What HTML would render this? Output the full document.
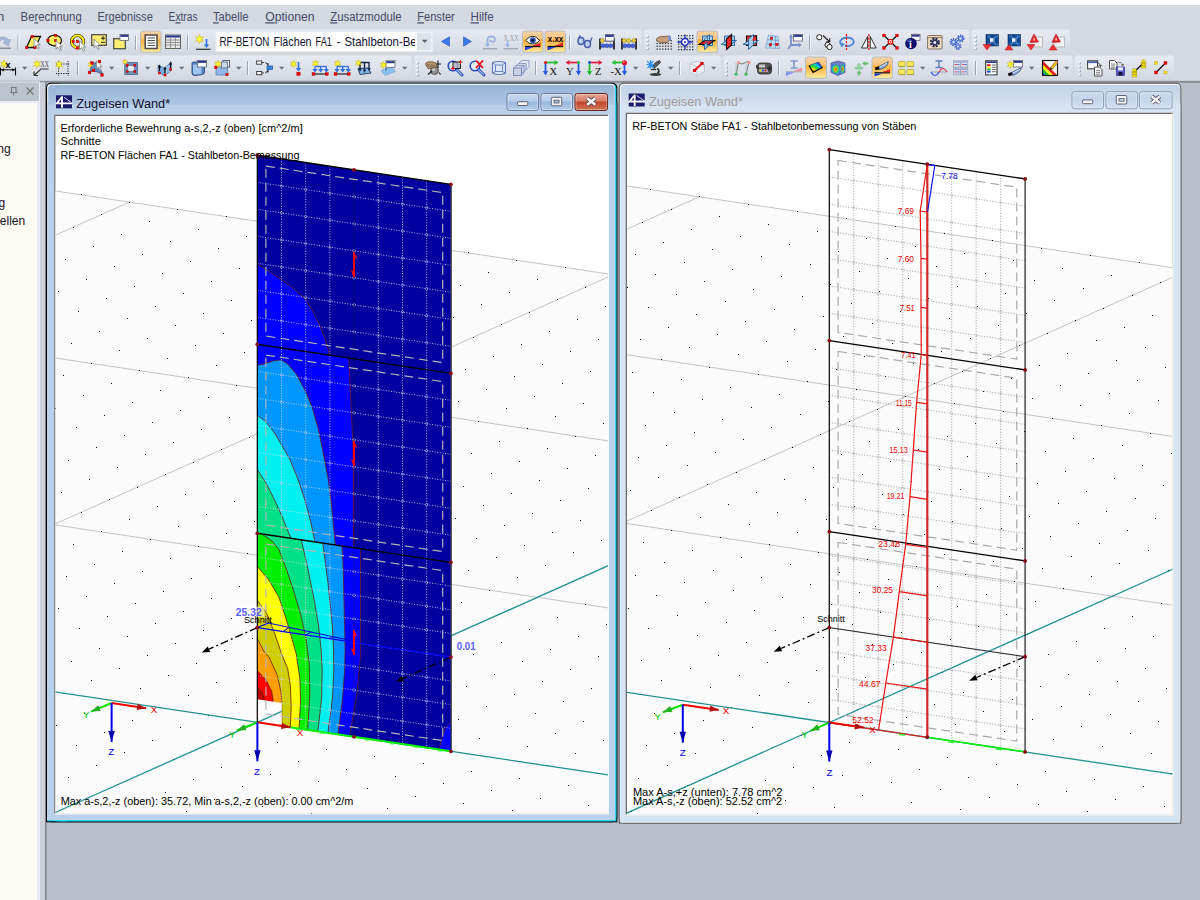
<!DOCTYPE html>
<html lang="de"><head><meta charset="utf-8"><title>RFEM - Zugeisen Wand</title>
<style>*{margin:0;padding:0}html,body{width:1200px;height:900px;overflow:hidden;background:#b9c0cb}svg{display:block;position:absolute;left:0;top:0}text{white-space:pre}</style></head><body>
<svg width="1200" height="900" viewBox="0 0 1200 900" font-family="Liberation Sans, sans-serif">
<defs>
<linearGradient id="tbg" x1="0" y1="0" x2="0" y2="1"><stop offset="0" stop-color="#e7eaf1"/><stop offset="0.5" stop-color="#dde1ea"/><stop offset="1" stop-color="#d1d6e1"/></linearGradient>
<linearGradient id="titA" x1="0" y1="0" x2="0" y2="1"><stop offset="0" stop-color="#98b4d6"/><stop offset="1" stop-color="#b9d1ea"/></linearGradient>
<linearGradient id="titI" x1="0" y1="0" x2="0" y2="1"><stop offset="0" stop-color="#c3d3e6"/><stop offset="1" stop-color="#dbe6f4"/></linearGradient>
<linearGradient id="btnA" x1="0" y1="0" x2="0" y2="1"><stop offset="0" stop-color="#c8daf0"/><stop offset="0.45" stop-color="#b4cbe8"/><stop offset="0.5" stop-color="#98b6da"/><stop offset="1" stop-color="#b6d0ec"/></linearGradient>
<linearGradient id="btnX" x1="0" y1="0" x2="0" y2="1"><stop offset="0" stop-color="#e8a898"/><stop offset="0.45" stop-color="#d87c68"/><stop offset="0.5" stop-color="#c2432c"/><stop offset="1" stop-color="#d07858"/></linearGradient>
<linearGradient id="btnI" x1="0" y1="0" x2="0" y2="1"><stop offset="0" stop-color="#cddbee"/><stop offset="0.5" stop-color="#c4d4ea"/><stop offset="1" stop-color="#d3e0f1"/></linearGradient>
<linearGradient id="hot" x1="0" y1="0" x2="0" y2="1"><stop offset="0" stop-color="#f8d2a8"/><stop offset="0.36" stop-color="#fbc57c"/><stop offset="0.42" stop-color="#fcae3e"/><stop offset="0.75" stop-color="#fdd070"/><stop offset="1" stop-color="#feec9e"/></linearGradient>
</defs>
<rect x="0" y="0" width="1200" height="900" fill="#b9c0cb"/>
<rect x="0" y="0" width="1200" height="5" fill="#fff" />
<rect x="0" y="5" width="1200" height="77" fill="#d5d9e2" />
<text x="-2.7" y="21.3" font-size="12" fill="#464a66" font-family="Liberation Sans, sans-serif" textLength="7" lengthAdjust="spacingAndGlyphs">n</text>
<text x="20.6" y="21.3" font-size="12" fill="#464a66" font-family="Liberation Sans, sans-serif" textLength="61.1" lengthAdjust="spacingAndGlyphs">Be<tspan text-decoration="underline">r</tspan>echnung</text>
<text x="97.5" y="21.3" font-size="12" fill="#464a66" font-family="Liberation Sans, sans-serif" textLength="55.3" lengthAdjust="spacingAndGlyphs">Er<tspan text-decoration="underline">g</tspan>ebnisse</text>
<text x="168.6" y="21.3" font-size="12" fill="#464a66" font-family="Liberation Sans, sans-serif" textLength="29" lengthAdjust="spacingAndGlyphs">E<tspan text-decoration="underline">x</tspan>tras</text>
<text x="213" y="21.3" font-size="12" fill="#464a66" font-family="Liberation Sans, sans-serif" textLength="35.5" lengthAdjust="spacingAndGlyphs"><tspan text-decoration="underline">T</tspan>abelle</text>
<text x="265.2" y="21.3" font-size="12" fill="#464a66" font-family="Liberation Sans, sans-serif" textLength="49.4" lengthAdjust="spacingAndGlyphs"><tspan text-decoration="underline">O</tspan>ptionen</text>
<text x="330.2" y="21.3" font-size="12" fill="#464a66" font-family="Liberation Sans, sans-serif" textLength="71.5" lengthAdjust="spacingAndGlyphs"><tspan text-decoration="underline">Z</tspan>usatzmodule</text>
<text x="417.3" y="21.3" font-size="12" fill="#464a66" font-family="Liberation Sans, sans-serif" textLength="37.5" lengthAdjust="spacingAndGlyphs"><tspan text-decoration="underline">F</tspan>enster</text>
<text x="470.6" y="21.3" font-size="12" fill="#464a66" font-family="Liberation Sans, sans-serif" textLength="23.2" lengthAdjust="spacingAndGlyphs"><tspan text-decoration="underline">H</tspan>ilfe</text>
<rect x="-5" y="29.5" width="646.5" height="25.5" fill="url(#tbg)" rx="3"/>
<rect x="644" y="29.5" width="325" height="25.5" fill="url(#tbg)" rx="3"/>
<rect x="971.5" y="29.5" width="98.5" height="25.5" fill="url(#tbg)" rx="3"/>
<rect x="-5" y="55.5" width="416.5" height="25.5" fill="url(#tbg)" rx="3"/>
<rect x="414" y="55.5" width="307" height="25.5" fill="url(#tbg)" rx="3"/>
<rect x="723.5" y="55.5" width="349" height="25.5" fill="url(#tbg)" rx="3"/>
<rect x="1075" y="55.5" width="99" height="25.5" fill="url(#tbg)" rx="3"/>
<rect x="0" y="80.2" width="1200" height="1.2" fill="#c4c8d1" />
<rect x="0" y="81.2" width="1200" height="1.5" fill="#7c8086" />
<path d="M-4 43 C-2 36 6 35 8 40 L10.5 39.5 L8.5 46 L3 42.5 L5.5 41.5 C4 38.5 0 39 -1 43Z" fill="#a9bad6" stroke="#8da2c4" stroke-width="0.7" />
<rect x="-2" y="47.5" width="13" height="1.5" fill="#8a8e98" />
<rect x="17.5" y="35.5" width="1" height="14" fill="#9ca2b0" /><rect x="18.5" y="35.5" width="1" height="14" fill="#f6f8fb" />
<g transform="translate(26 34)"><polygon points="5.5,2.5 14.5,2.5 9,13.5 0.5,13.5" fill="#ffef60" stroke="#101010" stroke-width="1.3"/><rect x="5" y="1.2" width="2.6" height="2.6" fill="#f00000" stroke="#a00000" stroke-width="0.3"/><rect x="-0.6" y="12.2" width="2.6" height="2.6" fill="#f00000" stroke="#a00000" stroke-width="0.3"/><rect x="7.7" y="12.2" width="2.6" height="2.6" fill="#f00000" stroke="#a00000" stroke-width="0.3"/><g transform="translate(8 4.5) scale(0.95)"><path d="M0 0L0 9L2.2 7L4 10.8L5.6 10L3.8 6.4L6.6 6.4Z" fill="#fff" stroke="#808080" stroke-width="0.9" /></g></g>
<g transform="translate(47 34)"><ellipse cx="7.5" cy="6.5" rx="7" ry="5.3" fill="#ffef60" stroke="#101010" stroke-width="1.2"/><rect x="7.2" y="0.2" width="2.6" height="2.6" fill="#f00000" stroke="#a00000" stroke-width="0.3"/><rect x="-0.3" y="5.2" width="2.6" height="2.6" fill="#f00000" stroke="#a00000" stroke-width="0.3"/><rect x="7.2" y="5.2" width="2.6" height="2.6" fill="#f00000" stroke="#a00000" stroke-width="0.3"/><g transform="translate(9 6.5) scale(0.95)"><path d="M0 0L0 9L2.2 7L4 10.8L5.6 10L3.8 6.4L6.6 6.4Z" fill="#fff" stroke="#808080" stroke-width="0.9" /></g></g>
<g transform="translate(70 34)"><circle cx="7.5" cy="7.5" r="6" fill="none" stroke="#202000" stroke-width="3.2"/><circle cx="7.5" cy="7.5" r="6" fill="none" stroke="#ffee10" stroke-width="2"/><rect x="1.9" y="6.2" width="2.6" height="2.6" fill="#f00000" stroke="#a00000" stroke-width="0.3"/><rect x="6.2" y="6.2" width="2.6" height="2.6" fill="#f00000" stroke="#a00000" stroke-width="0.3"/><rect x="6.2" y="12.7" width="2.6" height="2.6" fill="#f00000" stroke="#a00000" stroke-width="0.3"/><g transform="translate(9.5 7) scale(0.95)"><path d="M0 0L0 9L2.2 7L4 10.8L5.6 10L3.8 6.4L6.6 6.4Z" fill="#fff" stroke="#808080" stroke-width="0.9" /></g></g>
<g transform="translate(91 34)"><rect x="0.7" y="0.7" width="14.6" height="10.6" fill="#ffef70" stroke="#505050" stroke-width="1.3"/><path d="M10 4.2h4M12 2.2v4M10 8.3h4" fill="none" stroke="#202020" stroke-width="1" /><g transform="translate(3 5) scale(0.95)"><path d="M0 0L0 9L2.2 7L4 10.8L5.6 10L3.8 6.4L6.6 6.4Z" fill="#fff" stroke="#808080" stroke-width="0.9" /></g></g>
<g transform="translate(113 34)"><rect x="0.7" y="4.7" width="11.6" height="10" fill="#ffef70" stroke="#505050" stroke-width="1.3"/><rect x="7" y="0.5" width="8.5" height="6" fill="#fff" stroke="#606070" stroke-width="0.8"/><rect x="7.4" y="0.9" width="7.7" height="2" fill="#283890" /></g>
<rect x="135" y="35.5" width="1" height="14" fill="#9ca2b0" /><rect x="136" y="35.5" width="1" height="14" fill="#f6f8fb" />
<rect x="140.5" y="31" width="20.5" height="21.3" fill="url(#hot)" rx="2.5" stroke="#b4bcc4" stroke-width="1"/>
<g transform="translate(144.5 34)"><rect x="0.7" y="1" width="11.8" height="13.5" fill="#fff" stroke="#484848" stroke-width="1.5"/><path d="M3 4h7.5M3 6.5h7.5M3 9h7.5M3 11.5h7.5" fill="none" stroke="#505050" stroke-width="1" /></g>
<g transform="translate(165 34)"><rect x="0.5" y="1" width="15" height="13.5" fill="#e8e8e8" stroke="#606060" stroke-width="1"/><rect x="1" y="1.5" width="14" height="2" fill="#283890" /><path d="M1 6h14M1 8.5h14M1 11h14M5.5 3.5v11M10.5 3.5v11" fill="none" stroke="#8c8c8c" stroke-width="0.9" /></g>
<rect x="187" y="35.5" width="1" height="14" fill="#9ca2b0" /><rect x="188" y="35.5" width="1" height="14" fill="#f6f8fb" />
<g transform="translate(195 34)"><polygon points="4.5,0.5 5.51,3.25 8.4,2.75 6.53,5 8.4,7.25 5.51,6.75 4.5,9.5 3.49,6.75 0.6,7.25 2.48,5 0.6,2.75 3.49,3.25" fill="#ffff30" stroke="#c8b020" stroke-width="0.6"/><line x1="11.5" y1="5" x2="11.5" y2="12" stroke="#3070e0" stroke-width="1.6" /><polygon points="8.9,10.5 14.1,10.5 11.5,14" fill="#3070e0" /><line x1="1" y1="15.3" x2="15.5" y2="15.3" stroke="#303030" stroke-width="1.2" /></g>
<rect x="216" y="31.5" width="216.5" height="20" fill="#fff" stroke="#e8ebf2" stroke-width="1"/>
<rect x="417" y="32.5" width="14.5" height="18" fill="#dde1e9" />
<polygon points="421.8,39.7 427.6,39.7 424.7,42.9" fill="#606060" />
<text y="46.3" font-size="12.2" fill="#10102c" font-family="Liberation Sans, sans-serif"><tspan x="219.4" textLength="50" lengthAdjust="spacingAndGlyphs">RF-BETON</tspan> <tspan x="273.4" textLength="38.2" lengthAdjust="spacingAndGlyphs">Flächen</tspan> <tspan x="315.6" textLength="16.4" lengthAdjust="spacingAndGlyphs">FA1</tspan> <tspan x="336.4" textLength="4" lengthAdjust="spacingAndGlyphs">-</tspan> <tspan x="344.4" textLength="72.3" lengthAdjust="spacingAndGlyphs">Stahlbeton-Be</tspan></text>
<rect x="415" y="33" width="2" height="17" fill="#fff" />
<polygon points="441.5,41.5 449.5,36.8 449.5,46.2" fill="#3c78f0" stroke="#2a50b0" stroke-width="0.6"/>
<polygon points="471.5,41.5 463.5,36.8 463.5,46.2" fill="#3c78f0" stroke="#2a50b0" stroke-width="0.6"/>
<g transform="translate(482 34)"><path d="M5.5 12V5.5C5.5 1.5 13 1.5 13 5.5C13 8.5 8 8.5 8 5.8" fill="none" stroke="#9ab0d8" stroke-width="1.8" /><line x1="5.5" y1="8" x2="5.5" y2="11.5" stroke="#9ab8e8" stroke-width="1.6" /><polygon points="2.9,10 8.1,10 5.5,13.5" fill="#9ab8e8" /><line x1="1" y1="14.8" x2="15" y2="14.8" stroke="#9098a8" stroke-width="1.1" /></g>
<g transform="translate(503 34)"><text x="0.5" y="6.5" font-size="7.5" fill="#9a9aa4" font-family="Liberation Serif, serif" textLength="15.3" lengthAdjust="spacingAndGlyphs">X.XX</text><line x1="4.5" y1="7" x2="4.5" y2="11.5" stroke="#9ab8e8" stroke-width="1.6" /><polygon points="1.9,10 7.1,10 4.5,13.5" fill="#9ab8e8" /><line x1="0.5" y1="14.8" x2="15" y2="14.8" stroke="#9098a8" stroke-width="1.1" /></g>
<rect x="522.5" y="31" width="20.5" height="21.3" fill="url(#hot)" rx="2.5" stroke="#b4bcc4" stroke-width="1"/>
<g transform="translate(525 34)"><path d="M1 6.5C4 1 11 1 14.5 6.5C11 11 4 11 1 6.5Z" fill="#fff" stroke="#202020" stroke-width="1" /><circle cx="7.8" cy="6.2" r="3" fill="#2858c8" /><circle cx="7.8" cy="6.2" r="1.3" fill="#000" /><line x1="0" y1="12.5" x2="15.5" y2="12.5" stroke="#101010" stroke-width="1.3" /><polygon points="0,13.1 8.53,13.1 0,16.5" fill="#2040e0" /><polygon points="15.5,11.9 6.98,11.9 15.5,8.5" fill="#e02020" /></g>
<rect x="545" y="31" width="20.5" height="21.3" fill="url(#hot)" rx="2.5" stroke="#b4bcc4" stroke-width="1"/>
<g transform="translate(547.5 34)"><text x="0.3" y="8" font-size="9.5" fill="#000" font-family="Liberation Sans, sans-serif" font-weight="bold" textLength="15.4" lengthAdjust="spacingAndGlyphs">x.xx</text><line x1="0" y1="12.5" x2="15.5" y2="12.5" stroke="#101010" stroke-width="1.3" /><polygon points="0,13.1 8.53,13.1 0,16.5" fill="#2040e0" /><polygon points="15.5,11.9 6.98,11.9 15.5,8.5" fill="#e02020" /></g>
<rect x="569" y="35.5" width="1" height="14" fill="#9ca2b0" /><rect x="570" y="35.5" width="1" height="14" fill="#f6f8fb" />
<g transform="translate(577 34)"><ellipse cx="4" cy="7" rx="3" ry="3.5" fill="#c0d0f0" stroke="#4860a8" stroke-width="1.5"/><ellipse cx="10.5" cy="10" rx="3" ry="3.5" fill="#c0d0f0" stroke="#4860a8" stroke-width="1.5"/><path d="M6.5 8l1.5 0.8M13 8.5L15 3.5M1.5 4.5L3.5 1.5" fill="none" stroke="#4860a8" stroke-width="1.4" /></g>
<g transform="translate(599 34)"><path d="M1 4.5V15.5M15 4.5V15.5" fill="none" stroke="#101010" stroke-width="1.6" /><path d="M1 7h14M1 12h14" fill="none" stroke="#404040" stroke-width="0.8" /><circle cx="3.8" cy="11.8" r="2" fill="#4868e0" stroke="#203090" stroke-width="0.5"/><circle cx="7.8" cy="11.8" r="2" fill="#4868e0" stroke="#203090" stroke-width="0.5"/><circle cx="11.8" cy="11.8" r="2" fill="#4868e0" stroke="#203090" stroke-width="0.5"/><circle cx="3.2" cy="6.6" r="2" fill="#e8d040" stroke="#907810" stroke-width="0.5"/><rect x="6.5" y="0.5" width="8.5" height="6.5" fill="#fff" stroke="#606070" stroke-width="0.8"/><rect x="6.9" y="0.9" width="7.7" height="2" fill="#283890" /></g>
<g transform="translate(621 34)"><path d="M1 4.5V15.5M15 4.5V15.5" fill="none" stroke="#101010" stroke-width="1.6" /><path d="M1 7h14M1 12h14" fill="none" stroke="#404040" stroke-width="0.8" /><circle cx="3.8" cy="11.8" r="2" fill="#4868e0" stroke="#203090" stroke-width="0.5"/><circle cx="7.8" cy="11.8" r="2" fill="#4868e0" stroke="#203090" stroke-width="0.5"/><circle cx="11.8" cy="11.8" r="2" fill="#4868e0" stroke="#203090" stroke-width="0.5"/><circle cx="3.2" cy="6.6" r="2" fill="#e8d040" stroke="#907810" stroke-width="0.5"/><circle cx="7.5" cy="6.6" r="2" fill="#e8d040" stroke="#907810" stroke-width="0.5"/><circle cx="13" cy="6.6" r="2" fill="#e8d040" stroke="#907810" stroke-width="0.5"/></g>
<rect x="646.8" y="35.8" width="2" height="2" fill="#9aa2b2" /><rect x="646" y="35" width="2" height="2" fill="#f4f6fa" /><rect x="646.8" y="39.8" width="2" height="2" fill="#9aa2b2" /><rect x="646" y="39" width="2" height="2" fill="#f4f6fa" /><rect x="646.8" y="43.8" width="2" height="2" fill="#9aa2b2" /><rect x="646" y="43" width="2" height="2" fill="#f4f6fa" /><rect x="646.8" y="47.8" width="2" height="2" fill="#9aa2b2" /><rect x="646" y="47" width="2" height="2" fill="#f4f6fa" />
<g transform="translate(655 34)"><rect x="1.5" y="6" width="1.3" height="1.3" fill="#303030" /><rect x="1.5" y="8.8" width="1.3" height="1.3" fill="#303030" /><rect x="1.5" y="11.6" width="1.3" height="1.3" fill="#303030" /><rect x="1.5" y="14.4" width="1.3" height="1.3" fill="#303030" /><rect x="4.3" y="6" width="1.3" height="1.3" fill="#303030" /><rect x="4.3" y="8.8" width="1.3" height="1.3" fill="#303030" /><rect x="4.3" y="11.6" width="1.3" height="1.3" fill="#303030" /><rect x="4.3" y="14.4" width="1.3" height="1.3" fill="#303030" /><rect x="7.1" y="6" width="1.3" height="1.3" fill="#303030" /><rect x="7.1" y="8.8" width="1.3" height="1.3" fill="#303030" /><rect x="7.1" y="11.6" width="1.3" height="1.3" fill="#303030" /><rect x="7.1" y="14.4" width="1.3" height="1.3" fill="#303030" /><rect x="9.9" y="6" width="1.3" height="1.3" fill="#303030" /><rect x="9.9" y="8.8" width="1.3" height="1.3" fill="#303030" /><rect x="9.9" y="11.6" width="1.3" height="1.3" fill="#303030" /><rect x="9.9" y="14.4" width="1.3" height="1.3" fill="#303030" /><rect x="12.7" y="6" width="1.3" height="1.3" fill="#303030" /><rect x="12.7" y="8.8" width="1.3" height="1.3" fill="#303030" /><rect x="12.7" y="11.6" width="1.3" height="1.3" fill="#303030" /><rect x="12.7" y="14.4" width="1.3" height="1.3" fill="#303030" /><rect x="15.5" y="6" width="1.3" height="1.3" fill="#303030" /><rect x="15.5" y="8.8" width="1.3" height="1.3" fill="#303030" /><rect x="15.5" y="11.6" width="1.3" height="1.3" fill="#303030" /><rect x="15.5" y="14.4" width="1.3" height="1.3" fill="#303030" /><path d="M1 5.5C3 3 6 2 9 2.5L15 2L15.5 5.5L12 8.5L6 8.8C4 8.6 2.5 7 1 5.5Z" fill="#c8a080" stroke="#6a4828" stroke-width="0.8" /><path d="M13 2.3l2.5-0.5 0.5 4-2.2 1z" fill="#7090d8" stroke="none" stroke-width="1" /></g>
<g transform="translate(677 34)"><rect x="1" y="1" width="1.3" height="1.3" fill="#303030" /><rect x="1" y="3.8" width="1.3" height="1.3" fill="#303030" /><rect x="1" y="6.6" width="1.3" height="1.3" fill="#303030" /><rect x="1" y="9.4" width="1.3" height="1.3" fill="#303030" /><rect x="1" y="12.2" width="1.3" height="1.3" fill="#303030" /><rect x="1" y="15" width="1.3" height="1.3" fill="#303030" /><rect x="3.8" y="1" width="1.3" height="1.3" fill="#303030" /><rect x="3.8" y="3.8" width="1.3" height="1.3" fill="#303030" /><rect x="3.8" y="6.6" width="1.3" height="1.3" fill="#303030" /><rect x="3.8" y="9.4" width="1.3" height="1.3" fill="#303030" /><rect x="3.8" y="12.2" width="1.3" height="1.3" fill="#303030" /><rect x="3.8" y="15" width="1.3" height="1.3" fill="#303030" /><rect x="6.6" y="1" width="1.3" height="1.3" fill="#303030" /><rect x="6.6" y="3.8" width="1.3" height="1.3" fill="#303030" /><rect x="6.6" y="6.6" width="1.3" height="1.3" fill="#303030" /><rect x="6.6" y="9.4" width="1.3" height="1.3" fill="#303030" /><rect x="6.6" y="12.2" width="1.3" height="1.3" fill="#303030" /><rect x="6.6" y="15" width="1.3" height="1.3" fill="#303030" /><rect x="9.4" y="1" width="1.3" height="1.3" fill="#303030" /><rect x="9.4" y="3.8" width="1.3" height="1.3" fill="#303030" /><rect x="9.4" y="6.6" width="1.3" height="1.3" fill="#303030" /><rect x="9.4" y="9.4" width="1.3" height="1.3" fill="#303030" /><rect x="9.4" y="12.2" width="1.3" height="1.3" fill="#303030" /><rect x="9.4" y="15" width="1.3" height="1.3" fill="#303030" /><rect x="12.2" y="1" width="1.3" height="1.3" fill="#303030" /><rect x="12.2" y="3.8" width="1.3" height="1.3" fill="#303030" /><rect x="12.2" y="6.6" width="1.3" height="1.3" fill="#303030" /><rect x="12.2" y="9.4" width="1.3" height="1.3" fill="#303030" /><rect x="12.2" y="12.2" width="1.3" height="1.3" fill="#303030" /><rect x="12.2" y="15" width="1.3" height="1.3" fill="#303030" /><rect x="15" y="1" width="1.3" height="1.3" fill="#303030" /><rect x="15" y="3.8" width="1.3" height="1.3" fill="#303030" /><rect x="15" y="6.6" width="1.3" height="1.3" fill="#303030" /><rect x="15" y="9.4" width="1.3" height="1.3" fill="#303030" /><rect x="15" y="12.2" width="1.3" height="1.3" fill="#303030" /><rect x="15" y="15" width="1.3" height="1.3" fill="#303030" /><circle cx="8" cy="8" r="3.3" fill="#fff" stroke="#1828c0" stroke-width="1.3"/><path d="M8 0.5v4M8 11.5v4M0.5 8h4M11.5 8h4" fill="none" stroke="#1828c0" stroke-width="1.3" /><circle cx="8" cy="8" r="1" fill="#1828c0" /></g>
<rect x="697" y="31" width="20.5" height="21.3" fill="url(#hot)" rx="2.5" stroke="#b4bcc4" stroke-width="1"/>
<g transform="translate(699 34)"><polygon points="3.5,2 13.5,2 13.5,11.5 3.5,11.5" fill="#a4cef0" stroke="#2462a4" stroke-width="0.9"/><polygon points="5.5,5 10.5,0.5 10.5,11 5.5,15.5" fill="#a4cef0" stroke="#2462a4" stroke-width="0.9"/><polygon points="0,10.5 10,10.5 15.5,6.5 5.5,6.5" fill="#f02828" stroke="#180000" stroke-width="1.1"/><polygon points="5.5,10.5 8,8.4 8,13.2 5.5,15.5" fill="#a4cef0" stroke="#2462a4" stroke-width="0.9"/><path d="M8.5 2V6.5M3.5 6.8H13.5" fill="none" stroke="#2462a4" stroke-width="0.8" /></g>
<g transform="translate(721 34)"><polygon points="3.5,2 13.5,2 13.5,11.5 3.5,11.5" fill="#a4cef0" stroke="#2462a4" stroke-width="0.9"/><polygon points="0,10.5 10,10.5 15.5,6.5 5.5,6.5" fill="#a4cef0" stroke="#2462a4" stroke-width="0.9"/><polygon points="5.5,5 10.5,0.5 10.5,11 5.5,15.5" fill="#f02828" stroke="#180000" stroke-width="1.1"/><path d="M3.5 6.8H5.5M10.5 6.8H13.5" fill="none" stroke="#2462a4" stroke-width="0.8" /></g>
<g transform="translate(743 34)"><polygon points="3.5,2 13.5,2 13.5,11.5 3.5,11.5" fill="#f03030" stroke="#180000" stroke-width="1.1"/><polygon points="0,10.5 10,10.5 15.5,6.5 5.5,6.5" fill="#a4cef0" stroke="#2462a4" stroke-width="0.9"/><polygon points="5.5,5 10.5,0.5 10.5,11 5.5,15.5" fill="#a4cef0" stroke="#2462a4" stroke-width="0.9"/><polygon points="8.2,6.5 13.5,6.5 13.5,2 10.5,2 10.5,4.5" fill="#f03030" stroke="none"/><path d="M10.5 2H13.5V6.5" fill="none" stroke="#180000" stroke-width="1.1" /></g>
<g transform="translate(765 34)"><polygon points="3.5,1 13,2.5 14.5,14.5 0.5,14" fill="#b8dcf4" stroke="#88a8c8" stroke-width="0.8"/><path d="M2.5 5.5l11 1M1.5 10l12.5 0.8M7 1.5l-2 12.5M10.5 2l0 12.5" fill="none" stroke="#7898c0" stroke-width="0.8" /><rect x="5.3" y="3.1" width="2.4" height="2.4" fill="#f00000" stroke="#a00000" stroke-width="0.3"/><rect x="4.3" y="9.6" width="2.4" height="2.4" fill="#f00000" stroke="#a00000" stroke-width="0.3"/><rect x="10.8" y="9.3" width="2.4" height="2.4" fill="#f00000" stroke="#a00000" stroke-width="0.3"/></g>
<g transform="translate(787 34)"><path d="M4 11V2M4 11L13 11M4 11L1 15" fill="none" stroke="#7890c8" stroke-width="1.8" /><polygon points="4,0 1.8,3.5 6.2,3.5" fill="#7890c8" /><polygon points="15,11 11.5,8.8 11.5,13.2" fill="#7890c8" /><rect x="6.5" y="0.5" width="9" height="6.5" fill="#fff" stroke="#606070" stroke-width="0.8"/><rect x="6.9" y="0.9" width="8.2" height="2" fill="#283890" /></g>
<rect x="809" y="35.5" width="1" height="14" fill="#9ca2b0" /><rect x="810" y="35.5" width="1" height="14" fill="#f6f8fb" />
<g transform="translate(816 34)"><circle cx="3.3" cy="3.3" r="2.6" fill="#fff" stroke="#202020" stroke-width="1"/><circle cx="11.5" cy="11" r="2.6" fill="#fff" stroke="#202020" stroke-width="1"/><circle cx="13.5" cy="13" r="2.6" fill="#fff" stroke="#202020" stroke-width="1"/><path d="M7 1.5L13.5 7.5M13.8 4.2V7.8H10.2" fill="none" stroke="#202020" stroke-width="1.1" /></g>
<g transform="translate(839 34)"><path d="M3.5 11.5C-1.5 9 2 3.5 8 3.5C14 3.5 17 8 12.5 11C10.5 12.2 8 12.3 6 12" fill="none" stroke="#5088d8" stroke-width="1.8" /><polygon points="1.5,8.5 6,10 2.5,13.5" fill="#5088d8" /><line x1="7.5" y1="0" x2="7.5" y2="16" stroke="#f00000" stroke-width="1.2" stroke-dasharray="2.2 1.3"/></g>
<g transform="translate(861 34)"><polygon points="6.6,2.5 6.6,14 0.6,14" fill="#fff" stroke="#303030" stroke-width="1"/><polygon points="9.2,2.5 9.2,14 15.2,14" fill="#fff" stroke="#303030" stroke-width="1"/><line x1="7.9" y1="0" x2="7.9" y2="16" stroke="#f00000" stroke-width="1.2" stroke-dasharray="2.2 1.3"/></g>
<g transform="translate(882 34)"><path d="M2 1.5L15 14M15 1.5L2 14" fill="none" stroke="#101010" stroke-width="1.2" /><circle cx="8.5" cy="7.8" r="2.3" fill="#fff" stroke="#e00000" stroke-width="1.2"/><circle cx="8.5" cy="7.8" r="0.9" fill="#e00000" /><rect x="0.6" y="0.1" width="2.8" height="2.8" fill="#f00000" stroke="#a00000" stroke-width="0.3"/><rect x="13.6" y="0.1" width="2.8" height="2.8" fill="#f00000" stroke="#a00000" stroke-width="0.3"/><rect x="0.6" y="12.6" width="2.8" height="2.8" fill="#f00000" stroke="#a00000" stroke-width="0.3"/><rect x="13.6" y="12.6" width="2.8" height="2.8" fill="#f00000" stroke="#a00000" stroke-width="0.3"/></g>
<g transform="translate(905 34)"><rect x="6.5" y="0.3" width="8.5" height="6" fill="#fff" stroke="#606070" stroke-width="0.8"/><rect x="6.9" y="0.7" width="7.7" height="2" fill="#283890" /><circle cx="6" cy="9.5" r="5.8" fill="#10106a" /><ellipse cx="4.5" cy="6.8" rx="2.6" ry="1.6" fill="#5060c0" opacity="0.7"/><text x="4" y="13.5" font-size="10" fill="#fff" font-family="Liberation Serif, serif" font-weight="bold">i</text></g>
<g transform="translate(927 34)"><rect x="0.6" y="1.5" width="14.5" height="13.5" fill="#f0dcc0" stroke="#807060" stroke-width="1" rx="1"/><path d="M1 3.5h14" fill="none" stroke="#807060" stroke-width="0.8" /><circle cx="7.8" cy="8.5" r="3.6" fill="none" stroke="#283058" stroke-width="3" stroke-dasharray="1.9 0.95"/><circle cx="7.8" cy="8.5" r="3" fill="#283058"/><circle cx="7.8" cy="8.5" r="1.5" fill="#e8e8f8" /></g>
<g transform="translate(949 34)"><circle cx="4.5" cy="8" r="3" fill="none" stroke="#3c60c0" stroke-width="2" stroke-dasharray="1.3 0.9"/><circle cx="4.5" cy="8" r="2.6" fill="#5078d8"/><circle cx="4.5" cy="8" r="1.2" fill="#dde4f4" /><circle cx="11.5" cy="4.5" r="3" fill="none" stroke="#3c60c0" stroke-width="2" stroke-dasharray="1.3 0.9"/><circle cx="11.5" cy="4.5" r="2.6" fill="#5078d8"/><circle cx="11.5" cy="4.5" r="1.2" fill="#dde4f4" /><circle cx="9" cy="12.5" r="2.5" fill="none" stroke="#3c60c0" stroke-width="2" stroke-dasharray="1.3 0.9"/><circle cx="9" cy="12.5" r="2.1" fill="#5078d8"/><circle cx="9" cy="12.5" r="1" fill="#dde4f4" /></g>
<rect x="974.8" y="35.8" width="2" height="2" fill="#9aa2b2" /><rect x="974" y="35" width="2" height="2" fill="#f4f6fa" /><rect x="974.8" y="39.8" width="2" height="2" fill="#9aa2b2" /><rect x="974" y="39" width="2" height="2" fill="#f4f6fa" /><rect x="974.8" y="43.8" width="2" height="2" fill="#9aa2b2" /><rect x="974" y="43" width="2" height="2" fill="#f4f6fa" /><rect x="974.8" y="47.8" width="2" height="2" fill="#9aa2b2" /><rect x="974" y="47" width="2" height="2" fill="#f4f6fa" />
<g transform="translate(983 34)"><rect x="3" y="0.5" width="12.5" height="11.5" fill="#0c4890" stroke="#083060" stroke-width="0.6"/><path d="M4 2C7 5 11 5 15 2M4 11C7 8 11 8 15 11M6 1C8 5 8 8 6 12M13 1C11 5 11 8 13 12" fill="none" stroke="#70a0e0" stroke-width="0.8" opacity="0.8"/><rect x="7" y="4.3" width="3.5" height="3.5" fill="#e8f0ff" /><polygon points="0,10.5 8,10.5 4,16" fill="#f03030" stroke="#b01010" stroke-width="0.5"/></g>
<g transform="translate(1005 34)"><rect x="3" y="0.5" width="12.5" height="11.5" fill="#0c4890" stroke="#083060" stroke-width="0.6"/><path d="M4 2C7 5 11 5 15 2M4 11C7 8 11 8 15 11M6 1C8 5 8 8 6 12M13 1C11 5 11 8 13 12" fill="none" stroke="#70a0e0" stroke-width="0.8" opacity="0.8"/><rect x="7" y="4.3" width="3.5" height="3.5" fill="#e8f0ff" /><polygon points="0,16 8,16 4,10.5" fill="#f03030" stroke="#b01010" stroke-width="0.5"/></g>
<g transform="translate(1027 34)"><rect x="5" y="3" width="10.5" height="10" fill="#f0f0f0" stroke="#b0b0b0" stroke-width="0.8"/><polygon points="7,0 11.5,8 3,8.5" fill="#e82028" stroke="#a00810" stroke-width="0.5"/><polygon points="7,3 8.5,6.5 6,6.5" fill="#f8b0b0" /><polygon points="0,10.5 8,10.5 4,16" fill="#f03030" stroke="#b01010" stroke-width="0.5"/></g>
<g transform="translate(1049 34)"><rect x="5" y="3" width="10.5" height="10" fill="#f0f0f0" stroke="#b0b0b0" stroke-width="0.8"/><polygon points="7,0 11.5,8 3,8.5" fill="#e82028" stroke="#a00810" stroke-width="0.5"/><polygon points="7,3 8.5,6.5 6,6.5" fill="#f8b0b0" /><polygon points="0,16 8,16 4,10.5" fill="#f03030" stroke="#b01010" stroke-width="0.5"/></g>
<g transform="translate(0 60)"><polygon points="4,0 4.9,2.44 7.46,2 5.8,4 7.46,6 4.9,5.56 4,8 3.1,5.56 0.54,6 2.2,4 0.54,2 3.1,2.44" fill="#ffff30" stroke="#c8b020" stroke-width="0.6"/><text x="5.5" y="7.5" font-size="9" fill="#000" font-family="Liberation Sans, sans-serif" font-weight="bold">x</text><path d="M0.5 7.5V15.5M15.5 7.5V15.5M1 9.8H15" fill="none" stroke="#101010" stroke-width="1.1" /><polygon points="1,9.8 4,8.2 4,11.4" fill="#101010" /><polygon points="15,9.8 12,8.2 12,11.4" fill="#101010" /></g>
<polygon points="22,66.7 27.4,66.7 24.7,69.7" fill="#6e6e6e" />
<g transform="translate(33 60)"><polygon points="4,0 4.9,2.44 7.46,2 5.8,4 7.46,6 4.9,5.56 4,8 3.1,5.56 0.54,6 2.2,4 0.54,2 3.1,2.44" fill="#ffff30" stroke="#c8b020" stroke-width="0.6"/><text x="7.5" y="6.5" font-size="7.5" fill="#404040" font-family="Liberation Serif, serif" textLength="8.3" lengthAdjust="spacingAndGlyphs">XX</text><path d="M15.5 9H8L1 15.5M1 15.5V11.5M1 15.5H5" fill="none" stroke="#303030" stroke-width="1.1" /></g>
<g transform="translate(55 60)"><path d="M1 4H15M1 13.5H15M3.5 1V16M13 1V16" fill="none" stroke="#202020" stroke-width="1" stroke-dasharray="1.2 1.2"/><polygon points="4,0.5 4.9,2.94 7.46,2.5 5.8,4.5 7.46,6.5 4.9,6.06 4,8.5 3.1,6.06 0.54,6.5 2.2,4.5 0.54,2.5 3.1,2.94" fill="#ffff30" stroke="#c8b020" stroke-width="0.6"/></g>
<rect x="77" y="61" width="1" height="14" fill="#9ca2b0" /><rect x="78" y="61" width="1" height="14" fill="#f6f8fb" />
<g transform="translate(88 60)"><polygon points="3.5,3.5 9,2.5 14.5,14 5,10.5 1.5,12.5" fill="#6088b8" stroke="#385888" stroke-width="0.8"/><polygon points="2.5,1.5 3.17,3.33 5.1,3 3.85,4.5 5.1,6 3.18,5.67 2.5,7.5 1.83,5.67 -0.1,6 1.15,4.5 -0.1,3 1.82,3.33" fill="#ffff30" stroke="#c8b020" stroke-width="0.6"/><rect x="2.6" y="1.6" width="2.8" height="2.8" fill="#f00000" stroke="#a00000" stroke-width="0.3"/><rect x="10.1" y="0.1" width="2.8" height="2.8" fill="#f00000" stroke="#a00000" stroke-width="0.3"/><rect x="0.1" y="11.1" width="2.8" height="2.8" fill="#f00000" stroke="#a00000" stroke-width="0.3"/><rect x="4.1" y="9.1" width="2.8" height="2.8" fill="#f00000" stroke="#a00000" stroke-width="0.3"/><rect x="12.6" y="13.6" width="2.8" height="2.8" fill="#f00000" stroke="#a00000" stroke-width="0.3"/><g transform="translate(8.5 1) scale(0.85)"><path d="M0 0L0 9L2.2 7L4 10.8L5.6 10L3.8 6.4L6.6 6.4Z" fill="#fff" stroke="#808080" stroke-width="0.9" /></g></g>
<polygon points="109,66.7 114.4,66.7 111.7,69.7" fill="#6e6e6e" />
<g transform="translate(123 60)"><rect x="1.8" y="2.5" width="12.7" height="12" fill="#7090b8" stroke="#486890" stroke-width="0.8"/><rect x="4.5" y="5.5" width="7.2" height="6" fill="#e4e8f0" stroke="#486890" stroke-width="0.6"/><rect x="3.1" y="4.2" width="2.2" height="2.2" fill="#f00000" stroke="#a00000" stroke-width="0.3"/><rect x="10.7" y="4.2" width="2.2" height="2.2" fill="#f00000" stroke="#a00000" stroke-width="0.3"/><rect x="3.1" y="10.4" width="2.2" height="2.2" fill="#f00000" stroke="#a00000" stroke-width="0.3"/><rect x="10.7" y="10.4" width="2.2" height="2.2" fill="#f00000" stroke="#a00000" stroke-width="0.3"/><polygon points="2,-0.6 2.58,0.99 4.25,0.7 3.17,2 4.25,3.3 2.59,3.01 2,4.6 1.42,3.01 -0.25,3.3 0.83,2 -0.25,0.7 1.41,0.99" fill="#ffff30" stroke="#c8b020" stroke-width="0.6"/></g>
<polygon points="145,66.7 150.4,66.7 147.7,69.7" fill="#6e6e6e" />
<g transform="translate(157 60)"><polygon points="1,5 7.5,8 7.5,15.5 1,12" fill="#78b0e0" stroke="#4878a8" stroke-width="0.7"/><polygon points="7.5,8 14.5,2 14.5,10.5 7.5,15.5" fill="#98c8ec" stroke="#4878a8" stroke-width="0.7"/><rect x="1.4" y="11.9" width="2.2" height="2.2" fill="#f00000" stroke="#a00000" stroke-width="0.3"/><rect x="6.9" y="13.9" width="2.2" height="2.2" fill="#f00000" stroke="#a00000" stroke-width="0.3"/><rect x="12.4" y="8.4" width="2.2" height="2.2" fill="#f00000" stroke="#a00000" stroke-width="0.3"/><path d="M2.5 11V6M8 13V8M13.5 8V3" fill="none" stroke="#101010" stroke-width="1.2" /><polygon points="2.5,4.5 0.8,7.5 4.2,7.5" fill="#101010" /><polygon points="8,6.5 6.3,9.5 9.7,9.5" fill="#101010" /><polygon points="13.5,1.5 11.8,4.5 15.2,4.5" fill="#101010" /></g>
<polygon points="179,66.7 184.4,66.7 181.7,69.7" fill="#6e6e6e" />
<g transform="translate(191 60)"><path d="M1 3.5Q1 2 2.5 2H12Q13.5 2 13.5 3.5V12Q13.5 14 11.5 14.5L4 15.5Q1 15.5 1 13Z" fill="#5080c0" stroke="#284878" stroke-width="0.9" /><polygon points="2,4.5 10.5,5 10.5,14 3,14.5 2,13" fill="#a0c4ec" /><rect x="6.5" y="0.5" width="9" height="6.5" fill="#fff" stroke="#606070" stroke-width="0.8"/><rect x="6.9" y="0.9" width="8.2" height="2" fill="#283890" /></g>
<g transform="translate(214 60)"><rect x="9" y="0.5" width="6.5" height="6.5" fill="#e8eef8" stroke="#505868" stroke-width="0.9"/><rect x="2" y="7" width="11.5" height="8" fill="#90b8e8" stroke="#5078b0" stroke-width="0.7"/><rect x="7.5" y="2" width="6" height="6" fill="#c8daf2" stroke="#606878" stroke-width="0.8"/><polygon points="4,0.2 4.85,2.52 7.29,2.1 5.71,4 7.29,5.9 4.86,5.48 4,7.8 3.15,5.48 0.71,5.9 2.29,4 0.71,2.1 3.14,2.52" fill="#ffff30" stroke="#c8b020" stroke-width="0.6"/><rect x="0.5" y="6.2" width="2.6" height="2.6" fill="#f00000" stroke="#a00000" stroke-width="0.3"/><rect x="11.7" y="13.2" width="2.6" height="2.6" fill="#f00000" stroke="#a00000" stroke-width="0.3"/></g>
<polygon points="236,66.7 241.4,66.7 238.7,69.7" fill="#6e6e6e" />
<rect x="247" y="61" width="1" height="14" fill="#9ca2b0" /><rect x="248" y="61" width="1" height="14" fill="#f6f8fb" />
<g transform="translate(256 60)"><rect x="0.7" y="1" width="5" height="3.2" fill="#fff" stroke="#303030" stroke-width="0.9"/><rect x="0.7" y="11.5" width="5" height="3.2" fill="#fff" stroke="#303030" stroke-width="0.9"/><path d="M6 2.5H9Q11 3 11.5 5M6 13H9Q11 12.5 11.5 10.5" fill="none" stroke="#303030" stroke-width="0.9" stroke-dasharray="2 1"/><polygon points="10,3.5 12.8,6.5 12.5,3" fill="#303030" /><polygon points="10,12 12.8,9 12.5,12.6" fill="#303030" /><rect x="11" y="6" width="5.5" height="3.6" fill="#3888e8" stroke="#1850a0" stroke-width="0.7"/></g>
<polygon points="279,66.7 284.4,66.7 281.7,69.7" fill="#6e6e6e" />
<g transform="translate(290 60)"><polygon points="3.5,0.2 4.35,2.52 6.79,2.1 5.21,4 6.79,5.9 4.36,5.48 3.5,7.8 2.65,5.48 0.21,5.9 1.79,4 0.21,2.1 2.64,2.52" fill="#ffff30" stroke="#c8b020" stroke-width="0.6"/><line x1="8.5" y1="2" x2="8.5" y2="9.5" stroke="#3070e0" stroke-width="1.6" /><polygon points="5.9,8 11.1,8 8.5,11.5" fill="#3070e0" /><rect x="6.8" y="12.1" width="3.4" height="3.4" fill="#f00000" stroke="#a00000" stroke-width="0.3"/></g>
<g transform="translate(312 60)"><polygon points="3.5,-0.1 4.31,2.1 6.62,1.7 5.12,3.5 6.62,5.3 4.31,4.9 3.5,7.1 2.69,4.9 0.38,5.3 1.88,3.5 0.38,1.7 2.69,2.1" fill="#ffff30" stroke="#c8b020" stroke-width="0.6"/><path d="M3 6.5H14.5" fill="none" stroke="#3070e0" stroke-width="1.3" /><line x1="3" y1="6.5" x2="3" y2="10.5" stroke="#3070e0" stroke-width="1.3" /><polygon points="0.4,9 5.6,9 3,12.5" fill="#3070e0" /><line x1="8.7" y1="6.5" x2="8.7" y2="10.5" stroke="#3070e0" stroke-width="1.3" /><polygon points="6.1,9 11.3,9 8.7,12.5" fill="#3070e0" /><line x1="14.3" y1="6.5" x2="14.3" y2="10.5" stroke="#3070e0" stroke-width="1.3" /><polygon points="11.7,9 16.9,9 14.3,12.5" fill="#3070e0" /><line x1="1.5" y1="14" x2="14.5" y2="14" stroke="#202020" stroke-width="1.2" /><rect x="0" y="12.5" width="3" height="3" fill="#f00000" stroke="#a00000" stroke-width="0.3"/><rect x="13.3" y="12.5" width="3" height="3" fill="#f00000" stroke="#a00000" stroke-width="0.3"/></g>
<g transform="translate(334 60)"><polygon points="3.5,-0.1 4.31,2.1 6.62,1.7 5.12,3.5 6.62,5.3 4.31,4.9 3.5,7.1 2.69,4.9 0.38,5.3 1.88,3.5 0.38,1.7 2.69,2.1" fill="#ffff30" stroke="#c8b020" stroke-width="0.6"/><path d="M3 6.5H14.5" fill="none" stroke="#3070e0" stroke-width="1.3" /><line x1="3" y1="6.5" x2="3" y2="10.5" stroke="#3070e0" stroke-width="1.3" /><polygon points="0.4,9 5.6,9 3,12.5" fill="#3070e0" /><line x1="8.7" y1="6.5" x2="8.7" y2="10.5" stroke="#3070e0" stroke-width="1.3" /><polygon points="6.1,9 11.3,9 8.7,12.5" fill="#3070e0" /><line x1="14.3" y1="6.5" x2="14.3" y2="10.5" stroke="#3070e0" stroke-width="1.3" /><polygon points="11.7,9 16.9,9 14.3,12.5" fill="#3070e0" /><line x1="1.5" y1="14" x2="14.5" y2="14" stroke="#202020" stroke-width="1.2" /><rect x="0" y="12.5" width="3" height="3" fill="#f00000" stroke="#a00000" stroke-width="0.3"/><rect x="13.3" y="12.5" width="3" height="3" fill="#f00000" stroke="#a00000" stroke-width="0.3"/></g>
<g transform="translate(356 60)"><polygon points="2,8.5 12,8 15,13 4,14.5" fill="#80b8e8" stroke="#203858" stroke-width="0.9"/><path d="M4 2.5H13V9M4 2.5V9M8.5 2.5V10" fill="none" stroke="#182848" stroke-width="1.4" /><polygon points="4,12 2.3,8.5 5.7,8.5" fill="#182848" /><polygon points="13,11.5 11.3,8 14.7,8" fill="#182848" /><polygon points="8.5,13 6.8,9.5 10.2,9.5" fill="#182848" /><polygon points="2.5,-0.3 3.24,1.71 5.36,1.35 3.98,3 5.36,4.65 3.24,4.29 2.5,6.3 1.76,4.29 -0.36,4.65 1.02,3 -0.36,1.35 1.76,1.71" fill="#ffff30" stroke="#c8b020" stroke-width="0.6"/></g>
<g transform="translate(380 60)"><polygon points="1,10.5 12,7 15.5,11.5 5,15.5" fill="#88c0f0" stroke="#70a0d0" stroke-width="0.6"/><rect x="6" y="0.8" width="9" height="6.5" fill="#fff" stroke="#606070" stroke-width="0.8"/><rect x="6.4" y="1.2" width="8.2" height="2" fill="#283890" /><polygon points="3.5,1.4 4.31,3.6 6.62,3.2 5.12,5 6.62,6.8 4.31,6.4 3.5,8.6 2.69,6.4 0.38,6.8 1.88,5 0.38,3.2 2.69,3.6" fill="#ffff30" stroke="#c8b020" stroke-width="0.6"/><path d="M6 7.5v3" fill="none" stroke="#3060c0" stroke-width="1.2" /></g>
<polygon points="402,66.7 407.4,66.7 404.7,69.7" fill="#6e6e6e" />
<rect x="416.8" y="62.3" width="2" height="2" fill="#9aa2b2" /><rect x="416" y="61.5" width="2" height="2" fill="#f4f6fa" /><rect x="416.8" y="66.3" width="2" height="2" fill="#9aa2b2" /><rect x="416" y="65.5" width="2" height="2" fill="#f4f6fa" /><rect x="416.8" y="70.3" width="2" height="2" fill="#9aa2b2" /><rect x="416" y="69.5" width="2" height="2" fill="#f4f6fa" /><rect x="416.8" y="74.3" width="2" height="2" fill="#9aa2b2" /><rect x="416" y="73.5" width="2" height="2" fill="#f4f6fa" />
<g transform="translate(425 60)"><circle cx="9.5" cy="10.5" r="4" fill="#909090" stroke="#404040" stroke-width="0.8"/><circle cx="8.5" cy="9.5" r="1.5" fill="#d0d0d0" /><path d="M13 0.5V8M10 4H16M3 14.5L7 11M14 12.5l1.5 2" fill="none" stroke="#202020" stroke-width="1.2" /><path d="M0.5 3.5C3 1 7 1.5 11 3L12 6.5L8 8L3 8.5C2 7 1 5.5 0.5 3.5Z" fill="#b89878" stroke="#604020" stroke-width="0.8" /><path d="M2 4.5l8 1M2.5 6l7 1" fill="none" stroke="#604020" stroke-width="0.5" /></g>
<g transform="translate(447 60)"><circle cx="6" cy="6" r="4.8" fill="#e8f0fc" fill-opacity="0.6" stroke="#2848c0" stroke-width="1.6"/><path d="M9.5 9.5L15 15" fill="none" stroke="#2848c0" stroke-width="3" stroke-linecap="round"/><path d="M9.8 9.8L14.6 14.6" fill="none" stroke="#a8c8f8" stroke-width="1.2" stroke-linecap="round"/><rect x="6" y="2" width="7.5" height="6.5" fill="#b0b0b8" stroke="#101010" stroke-width="0.9" fill-opacity="0.7"/><path d="M13.5 0v4M11.5 2h4M6 6.5v4M4 8.5h4" fill="none" stroke="#f00000" stroke-width="1" /></g>
<g transform="translate(469 60)"><circle cx="6" cy="6" r="4.8" fill="#e8f0fc" fill-opacity="0.6" stroke="#2848c0" stroke-width="1.6"/><path d="M9.5 9.5L15 15" fill="none" stroke="#2848c0" stroke-width="3" stroke-linecap="round"/><path d="M9.8 9.8L14.6 14.6" fill="none" stroke="#a8c8f8" stroke-width="1.2" stroke-linecap="round"/><path d="M7 0.5L14 8M14 0.5L7 8" fill="none" stroke="#e81010" stroke-width="1.8" /></g>
<g transform="translate(491 60)"><path d="M1.5 2.5Q8 0.5 14.5 2.5V13Q8 16.5 1.5 13Z" fill="#dce6f6" stroke="#6078b8" stroke-width="1.1" /><path d="M4.5 5H11.5V11.5H4.5ZM1.5 2.5L4.5 5M14.5 2.5L11.5 5M1.5 13L4.5 11.5M14.5 13L11.5 11.5" fill="none" stroke="#6078b8" stroke-width="0.9" /></g>
<g transform="translate(513 60)"><polygon points="6,3 9,0.5 16,0.5 16,7 13,9.5 6,9.5" fill="#e0e6f2" stroke="#8090c0" stroke-width="0.8"/><polygon points="3,6 6,3.5 13,3.5 13,10 10,12.5 3,12.5" fill="#d0d8ea" stroke="#8090c0" stroke-width="0.8"/><rect x="0.5" y="8" width="8" height="7.5" fill="#c8d0e4" stroke="#7888b8" stroke-width="0.9"/><path d="M0.5 8L3.5 5.5H11L8.5 8M8.5 15.5L11 13V5.5" fill="none" stroke="#7888b8" stroke-width="0.8" /></g>
<rect x="535" y="61" width="1" height="14" fill="#9ca2b0" /><rect x="536" y="61" width="1" height="14" fill="#f6f8fb" />
<g transform="translate(543 60)"><line x1="2.5" y1="2.5" x2="13.5" y2="2.5" stroke="#20c030" stroke-width="1.8" /><polygon points="15.5,2.5 11.5,-0.1 11.5,5.1" fill="#20c030" /><line x1="2.5" y1="2.5" x2="2.5" y2="13.5" stroke="#2858e0" stroke-width="1.8" /><polygon points="2.5,15.5 -0.1,11 5.1,11" fill="#2858e0" /><circle cx="2.5" cy="2.5" r="1.6" fill="#e02020" /><text x="6.5" y="14.5" font-size="10.5" fill="#101010" font-family="Liberation Serif, serif">X</text></g>
<g transform="translate(565 60)"><line x1="13.5" y1="2.5" x2="2.5" y2="2.5" stroke="#e82040" stroke-width="1.8" /><polygon points="0.5,2.5 4.5,-0.1 4.5,5.1" fill="#e82040" /><line x1="13.5" y1="2.5" x2="13.5" y2="13.5" stroke="#2858e0" stroke-width="1.8" /><polygon points="13.5,15.5 10.9,11 16.1,11" fill="#2858e0" /><circle cx="13.5" cy="2.5" r="1.4" fill="#20c030" /><text x="1" y="14.5" font-size="10.5" fill="#101010" font-family="Liberation Serif, serif">Y</text></g>
<g transform="translate(587 60)"><line x1="2.5" y1="2.5" x2="13.5" y2="2.5" stroke="#e82040" stroke-width="1.8" /><polygon points="15.5,2.5 11.5,-0.1 11.5,5.1" fill="#e82040" /><line x1="2.5" y1="2.5" x2="2.5" y2="13.5" stroke="#20c030" stroke-width="1.8" /><polygon points="2.5,15.5 -0.1,11 5.1,11" fill="#20c030" /><circle cx="2.5" cy="2.5" r="1.4" fill="#2858e0" /><text x="8" y="14.5" font-size="10.5" fill="#101010" font-family="Liberation Serif, serif">Z</text></g>
<g transform="translate(611 60)"><line x1="13.5" y1="2.5" x2="2.5" y2="2.5" stroke="#20c030" stroke-width="1.8" /><polygon points="0.5,2.5 4.5,-0.1 4.5,5.1" fill="#20c030" /><line x1="13.5" y1="2.5" x2="13.5" y2="13.5" stroke="#2858e0" stroke-width="1.8" /><polygon points="13.5,15.5 10.9,11 16.1,11" fill="#2858e0" /><circle cx="13.5" cy="2.8" r="2.5" fill="#e01020" /><circle cx="12.8" cy="2.1" r="0.9" fill="#f88" /><text x="-0.5" y="14.5" font-size="10.5" fill="#101010" font-family="Liberation Serif, serif">-X</text></g>
<polygon points="633,66.7 638.4,66.7 635.7,69.7" fill="#6e6e6e" />
<g transform="translate(646 60)"><path d="M9.5 2.5L13.5 0.5L14.5 2.5L8 8.5L6 6.5Z" fill="#585858" stroke="#202020" stroke-width="0.7" /><path d="M11 8.5Q14.5 10.5 11.5 13.5" fill="none" stroke="#303030" stroke-width="1.8" /><ellipse cx="9.5" cy="14.5" rx="5.8" ry="1.5" fill="#383838"/><path d="M5 9.5H10" fill="none" stroke="#303030" stroke-width="1.3" /><path d="M1 1L8 8M7.5 1L1.5 8M4.5 0V9M0.5 4.5H8.5" fill="none" stroke="#2890f0" stroke-width="1.2" /></g>
<polygon points="668,66.7 673.4,66.7 670.7,69.7" fill="#6e6e6e" />
<rect x="679" y="61" width="1" height="14" fill="#9ca2b0" /><rect x="680" y="61" width="1" height="14" fill="#f6f8fb" />
<g transform="translate(689 60)"><path d="M1 3.5L9 1L15.5 4V11.5L8 15.5L1 12.5ZM1 3.5L8 7V15.5M8 7L15.5 4" fill="#eef0f6" stroke="#c0c4d0" stroke-width="1" /><line x1="5.5" y1="10.5" x2="13" y2="3.5" stroke="#f01010" stroke-width="1.8" /><rect x="4.1" y="9.1" width="2.8" height="2.8" fill="#f00000" stroke="#a00000" stroke-width="0.3"/><rect x="11.6" y="2.1" width="2.8" height="2.8" fill="#f00000" stroke="#a00000" stroke-width="0.3"/></g>
<polygon points="711,66.7 716.4,66.7 713.7,69.7" fill="#6e6e6e" />
<rect x="725.8" y="62.3" width="2" height="2" fill="#9aa2b2" /><rect x="725" y="61.5" width="2" height="2" fill="#f4f6fa" /><rect x="725.8" y="66.3" width="2" height="2" fill="#9aa2b2" /><rect x="725" y="65.5" width="2" height="2" fill="#f4f6fa" /><rect x="725.8" y="70.3" width="2" height="2" fill="#9aa2b2" /><rect x="725" y="69.5" width="2" height="2" fill="#f4f6fa" /><rect x="725.8" y="74.3" width="2" height="2" fill="#9aa2b2" /><rect x="725" y="73.5" width="2" height="2" fill="#f4f6fa" />
<g transform="translate(733 60)"><path d="M3 14.5L5.5 2.5Q9 5.5 11.5 3Q13.5 1 16 2L13 14.5" fill="none" stroke="#707070" stroke-width="1" /><path d="M3 14.5L3 2.5M13 14.5V2.5" fill="none" stroke="#b0b0b0" stroke-width="0.6" /><circle cx="5.5" cy="2.5" r="1.6" fill="#f09090" /><circle cx="16" cy="2.3" r="1.6" fill="#f09090" /><rect x="1.5" y="13" width="3" height="2.5" fill="#30c050" /><rect x="11.5" y="13" width="3" height="2.5" fill="#30c050" /></g>
<g transform="translate(756 60)"><rect x="1.5" y="3" width="14" height="11" fill="#585858" rx="3" stroke="#282828" stroke-width="0.8"/><rect x="3" y="4.5" width="6" height="3" fill="#c8c8c8" /><rect x="0" y="5" width="3" height="3.5" fill="#404040" /><rect x="2.5" y="8.5" width="10" height="4" fill="#a8a8a8" stroke="#303030" stroke-width="0.5"/><circle cx="4.5" cy="10.5" r="1" fill="#f0e000" /><circle cx="7" cy="10.5" r="1" fill="#2040e0" /><circle cx="9.5" cy="10.5" r="1" fill="#e02020" /><circle cx="13.5" cy="8.5" r="2.2" fill="#303030" /></g>
<rect x="778" y="61" width="1" height="14" fill="#9ca2b0" /><rect x="779" y="61" width="1" height="14" fill="#f6f8fb" />
<g transform="translate(786 60)"><path d="M4.5 1H11.5M8 1V8M4.5 8H11.5" fill="none" stroke="#8098c8" stroke-width="1.6" /><line x1="0" y1="11.8" x2="16" y2="11.8" stroke="#a0a0a8" stroke-width="1" /><polygon points="0,12.3 8.5,12.3 0,16" fill="#8090f0" /><polygon points="16,11.3 7.5,11.3 16,7.5" fill="#f09098" /></g>
<rect x="805.5" y="57" width="21" height="21.3" fill="url(#hot)" rx="2.5" stroke="#b4bcc4" stroke-width="1"/>
<g transform="translate(808 60)"><defs><radialGradient id="rb" gradientUnits="userSpaceOnUse" cx="4" cy="12.5" r="12.5"><stop offset="0.08" stop-color="#f01010"/><stop offset="0.3" stop-color="#f8e000"/><stop offset="0.5" stop-color="#20d020"/><stop offset="0.7" stop-color="#10c8e8"/><stop offset="0.92" stop-color="#1030e0"/></radialGradient></defs><polygon points="1,5.5 10.5,2 14.5,7.5 5,12.3" fill="url(#rb)" stroke="#303030" stroke-width="0.5"/><path d="M1 5.5L5 12.3L14.5 7.5" fill="none" stroke="#101010" stroke-width="1.3" /></g>
<g transform="translate(830 60)"><defs><radialGradient id="rc" cx="0.5" cy="0.5" r="0.55"><stop offset="0" stop-color="#f02020"/><stop offset="0.3" stop-color="#f0c020"/><stop offset="0.55" stop-color="#30d040"/><stop offset="0.8" stop-color="#20b0e0"/><stop offset="1" stop-color="#5060d0"/></radialGradient></defs><polygon points="1,3 8,1 15,3 15,12.5 8,15.5 1,12.5" fill="#7080c8" stroke="#485090" stroke-width="0.7"/><polygon points="1.5,4 10,5.5 10,14.5 1.5,12" fill="url(#rc)" /><polygon points="10.5,5.5 14.7,3.5 14.7,12.3 10.5,14.3" fill="url(#rc)" opacity="0.85"/></g>
<g transform="translate(853 60)"><ellipse cx="6" cy="8" rx="4.5" ry="1.6" fill="#88c898"/><path d="M4 8Q4 3 6 3Q8 3 8 8Z" fill="#98d0a8" stroke="none" stroke-width="1" /><path d="M15.5 3.5H11M6 15.5V12" fill="none" stroke="#68c070" stroke-width="1.8" /><polygon points="9,3.5 12.5,1 12.5,6" fill="#68c070" /><polygon points="6,10 3.5,13.5 8.5,13.5" fill="#68c070" /></g>
<rect x="872" y="57" width="20.5" height="21.3" fill="url(#hot)" rx="2.5" stroke="#b4bcc4" stroke-width="1"/>
<g transform="translate(874.5 60)"><path d="M4 6.8L13.8 1.6C13.5 5 10.5 8.2 5 9.6Z" fill="#88a6d4" stroke="#2c4474" stroke-width="0.7" /><path d="M5.5 7.2L12.5 3.2" fill="none" stroke="#e8f0ff" stroke-width="0.9" /><path d="M0.3 7.6L4 6.2L5 9.2L1.3 10.4Z" fill="#101010" stroke="none" stroke-width="1" /><line x1="0" y1="12.8" x2="15.5" y2="12.8" stroke="#101010" stroke-width="1.3" /><polygon points="0,13.4 8.53,13.4 0,16.4" fill="#2040e0" /><polygon points="15.5,12.2 6.98,12.2 15.5,9.2" fill="#e02020" /></g>
<g transform="translate(898 60)"><rect x="0.5" y="1.5" width="6.6" height="5.2" fill="#f8e860" stroke="#a89820" stroke-width="0.6" rx="0.8"/><rect x="1.1" y="5.9" width="6.2" height="1" fill="#887818" opacity="0.5"/><rect x="9" y="1.5" width="6.6" height="5.2" fill="#f8e860" stroke="#a89820" stroke-width="0.6" rx="0.8"/><rect x="9.6" y="5.9" width="6.2" height="1" fill="#887818" opacity="0.5"/><rect x="0.5" y="9.5" width="6.6" height="5.2" fill="#f8e860" stroke="#a89820" stroke-width="0.6" rx="0.8"/><rect x="1.1" y="13.9" width="6.2" height="1" fill="#887818" opacity="0.5"/><rect x="9" y="9.5" width="6.6" height="5.2" fill="#f8e860" stroke="#a89820" stroke-width="0.6" rx="0.8"/><rect x="9.6" y="13.9" width="6.2" height="1" fill="#887818" opacity="0.5"/></g>
<polygon points="920,66.7 925.4,66.7 922.7,69.7" fill="#6e6e6e" />
<g transform="translate(931 60)"><path d="M4.5 1H11.5M8 1V7.5M4.5 7.5H11.5" fill="none" stroke="#6080c8" stroke-width="1.5" /><line x1="0" y1="12" x2="16" y2="12" stroke="#9098a8" stroke-width="0.8" /><path d="M0 12Q4 19 8 12" fill="none" stroke="#3858e8" stroke-width="1.2" /><path d="M8 12Q12 5 16 12" fill="none" stroke="#e83040" stroke-width="1.2" /></g>
<g transform="translate(953 60)"><rect x="0.5" y="0.8" width="6.8" height="6.6" fill="#e4e6ee" stroke="#9098b0" stroke-width="0.7"/><rect x="0.9" y="1.2" width="6" height="1.6" fill="#98a8d8" /><rect x="1.5" y="4" width="2.4" height="1" fill="#e05060" /><rect x="4.1" y="4" width="2.4" height="1" fill="#5070e0" /><path d="M1.1 6.1h5.6" fill="none" stroke="#b0b4c4" stroke-width="0.6" /><rect x="8" y="0.8" width="6.8" height="6.6" fill="#e4e6ee" stroke="#9098b0" stroke-width="0.7"/><rect x="8.4" y="1.2" width="6" height="1.6" fill="#98a8d8" /><rect x="9" y="4" width="2.4" height="1" fill="#e05060" /><rect x="11.6" y="4" width="2.4" height="1" fill="#5070e0" /><path d="M8.6 6.1h5.6" fill="none" stroke="#b0b4c4" stroke-width="0.6" /><rect x="0.5" y="8.2" width="6.8" height="6.6" fill="#e4e6ee" stroke="#9098b0" stroke-width="0.7"/><rect x="0.9" y="8.6" width="6" height="1.6" fill="#98a8d8" /><rect x="1.5" y="11.4" width="2.4" height="1" fill="#e05060" /><rect x="4.1" y="11.4" width="2.4" height="1" fill="#5070e0" /><path d="M1.1 13.5h5.6" fill="none" stroke="#b0b4c4" stroke-width="0.6" /><rect x="8" y="8.2" width="6.8" height="6.6" fill="#e4e6ee" stroke="#9098b0" stroke-width="0.7"/><rect x="8.4" y="8.6" width="6" height="1.6" fill="#98a8d8" /><rect x="9" y="11.4" width="2.4" height="1" fill="#e05060" /><rect x="11.6" y="11.4" width="2.4" height="1" fill="#5070e0" /><path d="M8.6 13.5h5.6" fill="none" stroke="#b0b4c4" stroke-width="0.6" /></g>
<rect x="975" y="61" width="1" height="14" fill="#9ca2b0" /><rect x="976" y="61" width="1" height="14" fill="#f6f8fb" />
<g transform="translate(985 60)"><rect x="0.7" y="0.8" width="11.3" height="14" fill="#fff" stroke="#404040" stroke-width="1.2"/><rect x="1.3" y="1.4" width="10" height="1.6" fill="#283890" /><rect x="2" y="4.2" width="3.6" height="1.8" fill="#e02020" /><rect x="2" y="6.4" width="3.6" height="1.8" fill="#f0e000" /><rect x="2" y="8.6" width="3.6" height="1.8" fill="#20c020" /><rect x="2" y="10.8" width="3.6" height="1.8" fill="#2040e0" /><path d="M6.8 5h4M6.8 7.3h4M6.8 9.5h4M6.8 11.7h4" fill="none" stroke="#505050" stroke-width="0.9" /><rect x="4" y="14.2" width="5" height="1.6" fill="#90a0c0" /></g>
<g transform="translate(1007 60)"><rect x="6.5" y="0.5" width="9" height="6.5" fill="#fff" stroke="#606070" stroke-width="0.8"/><rect x="6.9" y="0.9" width="8.2" height="2" fill="#283890" /><polygon points="3.5,0.7 4.35,3.02 6.79,2.6 5.21,4.5 6.79,6.4 4.36,5.98 3.5,8.3 2.65,5.98 0.21,6.4 1.79,4.5 0.21,2.6 2.64,3.02" fill="#ffff30" stroke="#c8b020" stroke-width="0.6"/><path d="M4.5 12.6L14.5 7.5C14 11 10.5 14 5.5 15.4Z" fill="#88a6d4" stroke="#2c4474" stroke-width="0.7" /><path d="M6 13L13 9.3" fill="none" stroke="#e8f0ff" stroke-width="0.9" /><path d="M0.8 13.4L4.5 12L5.5 15L1.8 16.2Z" fill="#101010" stroke="none" stroke-width="1" /></g>
<polygon points="1029,66.7 1034.4,66.7 1031.7,69.7" fill="#6e6e6e" />
<g transform="translate(1042 60)"><rect x="0.5" y="0.5" width="15" height="15" fill="#f6f6f6" /><polygon points="0.5,0.5 15.5,15.5 11.5,15.5 0.5,4.5" fill="#e81818" /><polygon points="0.5,4.5 11.5,15.5 7.8,15.5 0.5,8.2" fill="#f8f000" /><polygon points="0.5,8.2 7.8,15.5 4.2,15.5 0.5,11.8" fill="#18c018" /><polygon points="0.5,11.8 4.2,15.5 0.5,15.5" fill="#1838e0" /><rect x="0.5" y="0.5" width="15" height="15" fill="none" stroke="#181818" stroke-width="1.1"/><path d="M8.5 7.5L13.5 1.5L15.5 3L10.5 9Z" fill="#f0c020" stroke="#705010" stroke-width="0.6" /><path d="M8.5 7.5L8 10L10.5 9Z" fill="#181818" stroke="none" stroke-width="1" /><path d="M13.5 1.5l1-1 2 1.5-1 1z" fill="#f08080" stroke="none" stroke-width="1" /></g>
<polygon points="1064,66.7 1069.4,66.7 1066.7,69.7" fill="#6e6e6e" />
<rect x="1078.8" y="62.3" width="2" height="2" fill="#9aa2b2" /><rect x="1078" y="61.5" width="2" height="2" fill="#f4f6fa" /><rect x="1078.8" y="66.3" width="2" height="2" fill="#9aa2b2" /><rect x="1078" y="65.5" width="2" height="2" fill="#f4f6fa" /><rect x="1078.8" y="70.3" width="2" height="2" fill="#9aa2b2" /><rect x="1078" y="69.5" width="2" height="2" fill="#f4f6fa" /><rect x="1078.8" y="74.3" width="2" height="2" fill="#9aa2b2" /><rect x="1078" y="73.5" width="2" height="2" fill="#f4f6fa" />
<g transform="translate(1087 60)"><rect x="0.6" y="0.8" width="10" height="8" fill="#fff" stroke="#404040" stroke-width="1.1"/><rect x="1.2" y="1.4" width="8.8" height="1.7" fill="#3858b0" /><path d="M11 3Q13.5 3.5 13.5 6" fill="none" stroke="#505050" stroke-width="0.9" /><polygon points="13.5,7.5 12,5 15,5" fill="#505050" /><polygon points="7.5,7 12.5,7 15,9.5 15,16 7.5,16" fill="#fff" stroke="#505050" stroke-width="1"/><path d="M9.1 10.6h3.9M9.1 12.4h3.9M9.1 14.2h3.9" fill="none" stroke="#606060" stroke-width="0.8" /></g>
<g transform="translate(1109 60)"><polygon points="0.5,0.5 5.5,0.5 8,3 8,9 0.5,9" fill="#fff" stroke="#505050" stroke-width="1"/><path d="M2.1 4.1h3.9M2.1 5.9h3.9M2.1 7.7h3.9" fill="none" stroke="#606060" stroke-width="0.8" /><path d="M8.5 2.5Q13 1.5 13.5 5" fill="none" stroke="#707070" stroke-width="0.9" /><polygon points="13.7,6.5 12.2,4 15.2,4" fill="#606060" /><rect x="7.5" y="7" width="8" height="8.5" fill="#5858d0" stroke="#303080" stroke-width="0.7"/><rect x="9" y="7.3" width="5" height="3.2" fill="#e8e8f4" /><rect x="9.5" y="12" width="4" height="3.3" fill="#101030" /></g>
<g transform="translate(1131 60)"><line x1="3.5" y1="11.5" x2="12.5" y2="3" stroke="#101010" stroke-width="1.3" /><rect x="1.9" y="8.9" width="3.2" height="2.4" fill="#f0e000" stroke="#a09000" stroke-width="0.4"/><rect x="1.1" y="11.5" width="4.8" height="2" fill="#f0e000" stroke="#a09000" stroke-width="0.4"/><rect x="1.9" y="12.4" width="3.2" height="2.4" fill="#f0e000" stroke="#a09000" stroke-width="0.4"/><rect x="1.1" y="15" width="4.8" height="2" fill="#f0e000" stroke="#a09000" stroke-width="0.4"/><rect x="10.9" y="-0.1" width="3.2" height="2.4" fill="#f0e000" stroke="#a09000" stroke-width="0.4"/><rect x="10.1" y="2.5" width="4.8" height="2" fill="#f0e000" stroke="#a09000" stroke-width="0.4"/><rect x="10.9" y="3.4" width="3.2" height="2.4" fill="#f0e000" stroke="#a09000" stroke-width="0.4"/><rect x="10.1" y="6" width="4.8" height="2" fill="#f0e000" stroke="#a09000" stroke-width="0.4"/></g>
<g transform="translate(1153 60)"><line x1="3" y1="12.5" x2="12.5" y2="3" stroke="#101010" stroke-width="1.3" /><rect x="1.5" y="11" width="3" height="3" fill="#f00000" stroke="#a00000" stroke-width="0.3"/><rect x="11" y="1.5" width="3" height="3" fill="#f00000" stroke="#a00000" stroke-width="0.3"/><rect x="1.5" y="1.5" width="3" height="3" fill="#f0e000" stroke="#a09000" stroke-width="0.3"/><rect x="11" y="11" width="3" height="3" fill="#f0e000" stroke="#a09000" stroke-width="0.3"/></g>
<rect x="0" y="82.5" width="46" height="818" fill="#d4d8e3" />
<rect x="40" y="82.5" width="5.5" height="818" fill="#cbd0da" />
<rect x="0" y="81.5" width="40" height="20" fill="#bcc3ce" />
<rect x="0" y="81.5" width="40" height="1" fill="#e4e8f2" />
<rect x="39" y="82.5" width="1" height="818" fill="#e9ecf6" />
<rect x="0" y="101" width="39" height="800" fill="#e9ecf6" />
<rect x="0" y="103.5" width="37" height="800" fill="#fbfbf4" />
<rect x="45.3" y="82.5" width="1" height="818" fill="#5a5e66" />
<path d="M11.5 87.5h4.5v5h-4.5zM10 92.5h7.5M13.7 92.5v3" fill="none" stroke="#777" stroke-width="1.1" />
<path d="M26.5 87.5l7 7M33.5 87.5l-7 7" fill="none" stroke="#777" stroke-width="1.3" />
<text x="10.6" y="152.7" font-size="12" fill="#15101e" font-family="Liberation Sans, sans-serif" text-anchor="end">ng</text>
<text x="5.1" y="206.5" font-size="12" fill="#15101e" font-family="Liberation Sans, sans-serif" text-anchor="end">g</text>
<text x="25.2" y="224.8" font-size="12" fill="#15101e" font-family="Liberation Sans, sans-serif" text-anchor="end">ellen</text>
<rect x="46" y="82.7" width="571.3" height="739.6" fill="#000" rx="5"/>
<rect x="46" y="102.7" width="571.3" height="719.6" fill="#000" />
<rect x="56" y="83.8" width="560.3" height="737.5" fill="#28d8f0" rx="4.5"/>
<rect x="56" y="102.7" width="560.3" height="718.6" fill="#28d8f0" />
<rect x="47.1" y="812.3" width="20" height="9" fill="#28d8f0" />
<rect x="47.1" y="83.8" width="567.9" height="736.2" fill="#f4f8fc" rx="4"/>
<rect x="47.1" y="102.7" width="567.9" height="717.3" fill="#b9d1ea" />
<rect x="48.2" y="84.9" width="566.6" height="31.3" fill="url(#titA)" rx="3.5"/>
<rect x="48.2" y="104.7" width="566.6" height="715.3" fill="#b9d1ea" />
<rect x="54.2" y="114.7" width="554.8" height="699.8" fill="#f4f7fb" />
<rect x="54.2" y="114.7" width="553.8" height="698.8" fill="#6c6c6c" />
<rect x="55.5" y="116" width="552.5" height="697.5" fill="#fff" />
<rect x="56" y="95.3" width="16" height="13" fill="#1c1c6c" /><path d="M62 96.8l-5.2 6.5h15.5M62 96.3v11.5" fill="none" stroke="#fff" stroke-width="1.8" /><path d="M64 97.3l7 5" fill="none" stroke="#d8d8f0" stroke-width="1" />
<text x="76.2" y="107.6" font-size="13" fill="#10102c" font-family="Liberation Sans, sans-serif" textLength="94" lengthAdjust="spacingAndGlyphs">Zugeisen Wand*</text>
<rect x="507" y="93.5" width="31.5" height="17" fill="url(#btnA)" rx="2.5" stroke="#6c7f9e" stroke-width="1"/>
<rect x="508" y="94.5" width="29.5" height="15" fill="none" rx="1.8" stroke="#fff" stroke-width="0.8" opacity="0.45"/>
<rect x="517.55" y="101.7" width="10.2" height="3.8" fill="#f4f4f4" stroke="#505468" stroke-width="0.9" rx="1"/>
<rect x="541" y="93.5" width="31.5" height="17" fill="url(#btnA)" rx="2.5" stroke="#6c7f9e" stroke-width="1"/>
<rect x="542" y="94.5" width="29.5" height="15" fill="none" rx="1.8" stroke="#fff" stroke-width="0.8" opacity="0.45"/>
<rect x="551.25" y="97.3" width="10.5" height="8.5" fill="#f4f4f4" stroke="#505468" stroke-width="0.9" rx="1"/>
<rect x="554.05" y="100.2" width="5" height="2.8" fill="#a8bcd8" stroke="#505468" stroke-width="0.8"/>
<rect x="575" y="93.5" width="32.5" height="17" fill="url(#btnX)" rx="2.5" stroke="#6a2418" stroke-width="1"/>
<rect x="576" y="94.5" width="30.5" height="15" fill="none" rx="1.8" stroke="#fff" stroke-width="0.8" opacity="0.45"/>
<path d="M587.25 98.2l8 6.6M595.25 98.2l-8 6.6" fill="none" stroke="#484858" stroke-width="4.2" stroke-linecap="butt"/>
<path d="M587.25 98.2l8 6.6M595.25 98.2l-8 6.6" fill="none" stroke="#f6f6f6" stroke-width="2.5" stroke-linecap="butt"/>
<clipPath id="clipL"><rect x="55.5" y="116" width="552.5" height="697.5"/></clipPath>
<g clip-path="url(#clipL)">
<rect x="55.5" y="116" width="552.5" height="697.5" fill="#fff" />
<polygon points="-548.2,100.46 2743,594.14 951,1394.14 -2340.2,900.46" fill="#fbfbfb" />
<line x1="-548.2" y1="100.46" x2="2743" y2="594.14" stroke="#c4c4c4" stroke-width="1" />
<line x1="-354.6" y1="129.5" x2="-2146.6" y2="929.5" stroke="#c4c4c4" stroke-width="1" />
<line x1="-828.2" y1="225.46" x2="2463" y2="719.14" stroke="#c4c4c4" stroke-width="1" />
<line x1="129.4" y1="202.1" x2="-1662.6" y2="1002.1" stroke="#c4c4c4" stroke-width="1" />
<line x1="-1108.2" y1="350.46" x2="2183" y2="844.14" stroke="#c4c4c4" stroke-width="1" />
<line x1="613.4" y1="274.7" x2="-1178.6" y2="1074.7" stroke="#c4c4c4" stroke-width="1" />
<line x1="-1668.2" y1="600.46" x2="1623" y2="1094.14" stroke="#c4c4c4" stroke-width="1" />
<line x1="1581.4" y1="419.9" x2="-210.6" y2="1219.9" stroke="#c4c4c4" stroke-width="1" />
<line x1="-1948.2" y1="725.46" x2="1343" y2="1219.14" stroke="#c4c4c4" stroke-width="1" />
<line x1="2065.4" y1="492.5" x2="273.4" y2="1292.5" stroke="#c4c4c4" stroke-width="1" />
<line x1="-2228.2" y1="850.46" x2="1063" y2="1344.14" stroke="#c4c4c4" stroke-width="1" />
<line x1="2549.4" y1="565.1" x2="757.4" y2="1365.1" stroke="#c4c4c4" stroke-width="1" />
<path d="M81 194.5h1M129 202.5h1M101 214.5h1M73 227.5h1M177 209.5h1M149 221.5h1M121 234.5h1M93 246.5h1M65 259.5h1M226 216.5h1M198 229.5h1M170 241.5h1M142 254.5h1M114 266.5h1M86 279.5h1M58 291.5h1M274 223.5h1M246 236.5h1M218 248.5h1M190 261.5h1M162 273.5h1M134 286.5h1M106 298.5h1M78 311.5h1M323 231.5h1M295 243.5h1M267 256.5h1M239 268.5h1M211 281.5h1M183 293.5h1M155 306.5h1M127 318.5h1M99 331.5h1M71 343.5h1M371 238.5h1M343 250.5h1M315 263.5h1M287 275.5h1M259 288.5h1M231 300.5h1M203 313.5h1M175 325.5h1M147 338.5h1M119 350.5h1M91 363.5h1M63 375.5h1M419 245.5h1M391 258.5h1M363 270.5h1M335 283.5h1M307 295.5h1M279 308.5h1M251 320.5h1M223 333.5h1M195 345.5h1M167 358.5h1M139 370.5h1M111 383.5h1M83 395.5h1M55 408.5h1M468 252.5h1M440 265.5h1M412 277.5h1M384 290.5h1M356 302.5h1M328 315.5h1M300 327.5h1M272 340.5h1M244 352.5h1M216 365.5h1M188 377.5h1M160 390.5h1M132 402.5h1M104 415.5h1M76 427.5h1M516 260.5h1M488 272.5h1M460 285.5h1M432 297.5h1M404 310.5h1M376 322.5h1M348 335.5h1M320 347.5h1M292 360.5h1M264 372.5h1M236 385.5h1M208 397.5h1M180 410.5h1M152 422.5h1M124 435.5h1M96 447.5h1M68 460.5h1M565 267.5h1M537 279.5h1M509 292.5h1M481 304.5h1M453 317.5h1M425 329.5h1M397 342.5h1M369 354.5h1M341 367.5h1M313 379.5h1M285 392.5h1M257 404.5h1M229 417.5h1M201 429.5h1M173 442.5h1M145 454.5h1M117 467.5h1M89 479.5h1M61 492.5h1M585 287.5h1M557 299.5h1M529 312.5h1M501 324.5h1M473 337.5h1M445 349.5h1M417 362.5h1M389 374.5h1M361 387.5h1M333 399.5h1M305 412.5h1M277 424.5h1M249 437.5h1M221 449.5h1M193 462.5h1M165 474.5h1M137 487.5h1M109 499.5h1M81 512.5h1M605 306.5h1M577 319.5h1M549 331.5h1M521 344.5h1M493 356.5h1M465 369.5h1M437 381.5h1M409 394.5h1M381 406.5h1M353 419.5h1M325 431.5h1M297 444.5h1M269 456.5h1M241 469.5h1M213 481.5h1M185 494.5h1M157 506.5h1M129 519.5h1M101 531.5h1M73 544.5h1M598 339.5h1M570 351.5h1M542 364.5h1M514 376.5h1M486 389.5h1M458 401.5h1M430 414.5h1M402 426.5h1M374 439.5h1M346 451.5h1M318 464.5h1M290 476.5h1M262 489.5h1M234 501.5h1M206 514.5h1M178 526.5h1M150 539.5h1M122 551.5h1M94 564.5h1M66 576.5h1M590 371.5h1M562 383.5h1M534 396.5h1M506 408.5h1M478 421.5h1M450 433.5h1M422 446.5h1M394 458.5h1M366 471.5h1M338 483.5h1M310 496.5h1M282 508.5h1M254 521.5h1M226 533.5h1M198 546.5h1M170 558.5h1M142 571.5h1M114 583.5h1M86 596.5h1M58 608.5h1M583 403.5h1M555 416.5h1M527 428.5h1M499 441.5h1M471 453.5h1M443 466.5h1M415 478.5h1M387 491.5h1M359 503.5h1M331 516.5h1M303 528.5h1M275 541.5h1M247 553.5h1M219 566.5h1M191 578.5h1M163 591.5h1M135 603.5h1M107 616.5h1M79 628.5h1M603 423.5h1M575 436.5h1M547 448.5h1M519 461.5h1M491 473.5h1M463 486.5h1M435 498.5h1M407 511.5h1M379 523.5h1M351 536.5h1M323 548.5h1M295 561.5h1M267 573.5h1M239 586.5h1M211 598.5h1M183 611.5h1M155 623.5h1M127 636.5h1M99 648.5h1M71 661.5h1M595 455.5h1M567 468.5h1M539 480.5h1M511 493.5h1M483 505.5h1M455 518.5h1M427 530.5h1M399 543.5h1M371 555.5h1M343 568.5h1M315 580.5h1M287 593.5h1M259 605.5h1M231 618.5h1M203 630.5h1M175 643.5h1M147 655.5h1M119 668.5h1M91 680.5h1M63 693.5h1M588 488.5h1M560 500.5h1M532 513.5h1M504 525.5h1M476 538.5h1M448 550.5h1M420 563.5h1M392 575.5h1M364 588.5h1M336 600.5h1M308 613.5h1M280 625.5h1M252 638.5h1M224 650.5h1M196 663.5h1M168 675.5h1M140 688.5h1M112 700.5h1M84 713.5h1M56 725.5h1M608 507.5h1M580 520.5h1M552 532.5h1M524 545.5h1M496 557.5h1M468 570.5h1M440 582.5h1M412 595.5h1M384 607.5h1M356 620.5h1M328 632.5h1M300 645.5h1M272 657.5h1M244 670.5h1M216 682.5h1M188 695.5h1M160 707.5h1M132 720.5h1M104 732.5h1M76 745.5h1M601 540.5h1M573 552.5h1M545 565.5h1M517 577.5h1M489 590.5h1M461 602.5h1M433 615.5h1M405 627.5h1M377 640.5h1M349 652.5h1M321 665.5h1M293 677.5h1M265 690.5h1M236 702.5h1M208 715.5h1M180 727.5h1M152 740.5h1M124 752.5h1M96 765.5h1M68 777.5h1M593 572.5h1M565 584.5h1M537 597.5h1M509 609.5h1M481 622.5h1M453 634.5h1M425 647.5h1M397 659.5h1M369 672.5h1M341 684.5h1M313 697.5h1M285 709.5h1M257 722.5h1M229 734.5h1M201 747.5h1M173 759.5h1M145 772.5h1M117 784.5h1M89 797.5h1M61 809.5h1M585 604.5h1M557 617.5h1M529 629.5h1M501 642.5h1M473 654.5h1M445 667.5h1M417 679.5h1M389 692.5h1M361 704.5h1M333 717.5h1M305 729.5h1M277 742.5h1M249 754.5h1M221 767.5h1M193 779.5h1M165 792.5h1M137 804.5h1M606 624.5h1M578 636.5h1M550 649.5h1M522 661.5h1M494 674.5h1M466 686.5h1M438 699.5h1M410 711.5h1M382 724.5h1M354 736.5h1M326 749.5h1M298 761.5h1M270 774.5h1M242 786.5h1M214 799.5h1M186 811.5h1M598 656.5h1M570 669.5h1M542 681.5h1M514 694.5h1M486 706.5h1M458 719.5h1M430 731.5h1M402 744.5h1M374 756.5h1M346 769.5h1M318 781.5h1M290 794.5h1M262 806.5h1M591 688.5h1M563 701.5h1M535 713.5h1M507 726.5h1M479 738.5h1M451 751.5h1M423 763.5h1M395 776.5h1M367 788.5h1M339 801.5h1M311 813.5h1M583 721.5h1M555 733.5h1M527 746.5h1M499 758.5h1M471 771.5h1M443 783.5h1M415 796.5h1M387 808.5h1M603 740.5h1M575 753.5h1M547 765.5h1M519 778.5h1M491 790.5h1M463 803.5h1M596 773.5h1M568 785.5h1M540 798.5h1M512 810.5h1M588 805.5h1" stroke="#000" stroke-width="1" fill="none" shape-rendering="crispEdges"/>
<line x1="-1388.2" y1="475.46" x2="1903" y2="969.14" stroke="#209090" stroke-width="1.3" />
<line x1="1097.4" y1="347.3" x2="-694.6" y2="1147.3" stroke="#209090" stroke-width="1.3" />
<clipPath id="st0"><polygon points="257.3,155.3 450.9,184.34 450.9,373.34 257.3,344.3"/></clipPath>
<clipPath id="st1"><polygon points="257.3,344.3 450.9,373.34 450.9,562.34 257.3,533.3"/></clipPath>
<clipPath id="st2"><polygon points="257.3,533.3 450.9,562.34 450.9,751.34 257.3,722.3"/></clipPath>
<polygon points="257.3,155.3 450.9,184.34 450.9,751.34 257.3,722.3" fill="#0000a0" />
<polygon points="254.3,222 254.3,222 254.3,262 257.2,264 268.8,271.2 281.8,279.9 293.3,288.6 304.9,298.7 312.1,310.2 319.3,324.7 325.1,339.1 328.7,352.1 330,362 330,402 254.3,402" fill="#0000ff" stroke="#6a1a1a" stroke-width="0.8" clip-path="url(#st0)"/>
<polygon points="254.3,312 348.4,312 348.4,352 348.7,358.1 350.4,392.8 351.8,421.7 352.8,440.4 353.5,470 353.7,560 353.7,600 254.3,600" fill="#0000ff" stroke="#6a1a1a" stroke-width="0.8" clip-path="url(#st1)"/>
<polygon points="254.3,326 254.3,326 254.3,366 257.2,365.3 264.4,363.9 273.1,361 281.1,359.8 287.6,363.9 296.2,374 304.9,389.9 312.1,407.2 317.9,427.4 322.2,447.7 325.5,465 328,478.3 330.9,500 333.8,528.9 335.2,543.3 336,556 336,596 254.3,596" fill="#0096ff" stroke="#6a1a1a" stroke-width="0.8" clip-path="url(#st1)"/>
<polygon points="254.3,373 254.3,373 254.3,413 257.2,415.2 265.9,421.7 274.6,433.2 283.2,447.7 289.7,459.2 297.7,478.3 304.9,500 310.7,521.7 314.3,539 316,552 316,592 254.3,592" fill="#00f0f0" stroke="#6a1a1a" stroke-width="0.8" clip-path="url(#st1)"/>
<polygon points="254.3,425 254.3,425 254.3,465 257.2,469.7 265.9,482.7 274.6,500 281.8,515.9 287.6,530.3 290.4,536.8 293,548 293,588 254.3,588" fill="#00e187" stroke="#6a1a1a" stroke-width="0.8" clip-path="url(#st1)"/>
<polygon points="254.3,500 360.5,500 360.5,540 360.5,548.8 360.5,655 359.8,663.9 356.9,692.8 353.3,714.4 349.7,734.7 348.5,745 348.5,785 254.3,785" fill="#0000ff" stroke="#6a1a1a" stroke-width="0.8" clip-path="url(#st2)"/>
<polygon points="254.3,495 341.5,495 341.5,535 342,546.7 343.2,568.3 343.9,597.2 344.6,626.1 345.1,650 344.6,671.1 342.4,700 338.1,733.2 337,745 337,785 254.3,785" fill="#0096ff" stroke="#6a1a1a" stroke-width="0.8" clip-path="url(#st2)"/>
<polygon points="254.3,492 322,492 322,532 322.9,543.8 325.1,561.1 328,582.8 330.2,604.4 332.3,626.1 333.6,650 333.8,671.1 332.3,700 328,731.8 326.5,745 326.5,785 254.3,785" fill="#00f0f0" stroke="#6a1a1a" stroke-width="0.8" clip-path="url(#st2)"/>
<polygon points="254.3,490 299,490 299,530 301.3,540.2 306.3,561.1 310.7,582.8 315,604.4 318.6,626.1 321.2,650 322.2,671.1 321.5,700 317.9,730.3 316.5,745 316.5,785 254.3,785" fill="#00e187" stroke="#6a1a1a" stroke-width="0.8" clip-path="url(#st2)"/>
<polygon points="254.3,490 257,490 257,530 264.4,535.8 272,541 278.9,549.6 286.1,568.3 293.3,590 300.6,614.6 305.8,637 309.2,663.9 309.9,692.8 307.8,728.9 307,745 307,785 254.3,785" fill="#00f000" stroke="#6a1a1a" stroke-width="0.8" clip-path="url(#st2)"/>
<polygon points="254.3,522 254.3,522 254.3,562 257.2,566.2 268.8,579.9 278.9,597.2 286.1,618.9 291.5,637 296.2,653.8 299.8,678.3 300.6,700 299.1,727.4 298.5,745 298.5,785 254.3,785" fill="#ffff00" stroke="#6a1a1a" stroke-width="0.8" clip-path="url(#st2)"/>
<polygon points="254.3,555 254.3,555 254.3,595 257.2,600.1 267.3,614.6 274.6,633.3 281.5,653.8 287.6,668.2 290.4,685.6 291.2,707.2 290.4,726 290,745 290,785 254.3,785" fill="#cdcd00" stroke="#6a1a1a" stroke-width="0.8" clip-path="url(#st2)"/>
<polygon points="254.3,594 254.3,594 254.3,634 257.2,638.5 264.4,652.1 268.8,656.7 277.4,675.4 281.1,692.8 281.8,702.2 281.8,745 281.8,785 254.3,785" fill="#ffa000" stroke="#6a1a1a" stroke-width="0.8" clip-path="url(#st2)"/>
<polygon points="254.3,627 254.3,627 254.3,667 257.2,670.4 265.9,679.8 271.7,691.3 273.1,700 273.5,712 273.5,752 254.3,752" fill="#ff0000" stroke="#6a1a1a" stroke-width="0.8" clip-path="url(#st2)"/>
<polygon points="254.3,644 254.3,644 254.3,684 257.2,687 262.3,692.8 264.4,699.3 265,712 265,752 254.3,752" fill="#c00000" stroke="#6a1a1a" stroke-width="0.8" clip-path="url(#st2)"/>
<polygon points="455,719 450.5,722.3 445.4,728.1 442.6,735.3 440.4,744 439.4,749 439,756 455,756" fill="#0000ff" stroke="#6a1a1a" stroke-width="0.8" clip-path="url(#st2)"/>
<polygon points="257.3,699.3 281.8,702.97 281.8,726.97 257.3,723.3" fill="#fbfbfb" />
<clipPath id="opn"><polygon points="257.3,699.3 281.8,702.97 281.8,725.97 257.3,722.3"/></clipPath>
<line x1="257.4" y1="722.3" x2="397.4" y2="659.8" stroke="#209090" stroke-width="1.3" clip-path="url(#opn)"/>
<path d="M281.5 158.93V702.93M305.7 162.56V729.56M329.9 166.19V733.19M378.3 173.45V740.45M402.5 177.08V744.08M426.7 180.71V747.71M257.3 182.3L450.9 211.34M257.3 209.3L450.9 238.34M257.3 236.3L450.9 265.34M257.3 263.3L450.9 292.34M257.3 290.3L450.9 319.34M257.3 317.3L450.9 346.34M257.3 371.3L450.9 400.34M257.3 398.3L450.9 427.34M257.3 425.3L450.9 454.34M257.3 452.3L450.9 481.34M257.3 479.3L450.9 508.34M257.3 506.3L450.9 535.34M257.3 557.01L450.9 586.05M257.3 580.73L450.9 609.77M257.3 604.44L450.9 633.48M257.3 628.16L450.9 657.2M257.3 651.87L450.9 680.91M257.3 675.59L450.9 704.63M281.8 702.97L450.9 728.34" stroke="#d8d8e8" stroke-width="1" stroke-dasharray="1 1.6" fill="none" opacity="0.85"/>
<g fill="none" stroke="#c8c8e4" stroke-width="0.6" opacity="0.75"><circle cx="281.5" cy="185.93" r="1.3"/><circle cx="281.5" cy="212.93" r="1.3"/><circle cx="281.5" cy="239.93" r="1.3"/><circle cx="281.5" cy="266.93" r="1.3"/><circle cx="281.5" cy="293.93" r="1.3"/><circle cx="281.5" cy="320.93" r="1.3"/><circle cx="281.5" cy="374.93" r="1.3"/><circle cx="281.5" cy="401.93" r="1.3"/><circle cx="281.5" cy="428.93" r="1.3"/><circle cx="281.5" cy="455.93" r="1.3"/><circle cx="281.5" cy="482.93" r="1.3"/><circle cx="281.5" cy="509.93" r="1.3"/><circle cx="281.5" cy="560.64" r="1.3"/><circle cx="281.5" cy="584.36" r="1.3"/><circle cx="281.5" cy="608.07" r="1.3"/><circle cx="281.5" cy="631.79" r="1.3"/><circle cx="281.5" cy="655.5" r="1.3"/><circle cx="281.5" cy="679.22" r="1.3"/><circle cx="305.7" cy="189.56" r="1.3"/><circle cx="305.7" cy="216.56" r="1.3"/><circle cx="305.7" cy="243.56" r="1.3"/><circle cx="305.7" cy="270.56" r="1.3"/><circle cx="305.7" cy="297.56" r="1.3"/><circle cx="305.7" cy="324.56" r="1.3"/><circle cx="305.7" cy="378.56" r="1.3"/><circle cx="305.7" cy="405.56" r="1.3"/><circle cx="305.7" cy="432.56" r="1.3"/><circle cx="305.7" cy="459.56" r="1.3"/><circle cx="305.7" cy="486.56" r="1.3"/><circle cx="305.7" cy="513.56" r="1.3"/><circle cx="305.7" cy="564.27" r="1.3"/><circle cx="305.7" cy="587.99" r="1.3"/><circle cx="305.7" cy="611.7" r="1.3"/><circle cx="305.7" cy="635.42" r="1.3"/><circle cx="305.7" cy="659.13" r="1.3"/><circle cx="305.7" cy="682.85" r="1.3"/><circle cx="305.7" cy="706.56" r="1.3"/><circle cx="329.9" cy="193.19" r="1.3"/><circle cx="329.9" cy="220.19" r="1.3"/><circle cx="329.9" cy="247.19" r="1.3"/><circle cx="329.9" cy="274.19" r="1.3"/><circle cx="329.9" cy="301.19" r="1.3"/><circle cx="329.9" cy="328.19" r="1.3"/><circle cx="329.9" cy="382.19" r="1.3"/><circle cx="329.9" cy="409.19" r="1.3"/><circle cx="329.9" cy="436.19" r="1.3"/><circle cx="329.9" cy="463.19" r="1.3"/><circle cx="329.9" cy="490.19" r="1.3"/><circle cx="329.9" cy="517.19" r="1.3"/><circle cx="329.9" cy="567.9" r="1.3"/><circle cx="329.9" cy="591.62" r="1.3"/><circle cx="329.9" cy="615.33" r="1.3"/><circle cx="329.9" cy="639.05" r="1.3"/><circle cx="329.9" cy="662.76" r="1.3"/><circle cx="329.9" cy="686.48" r="1.3"/><circle cx="329.9" cy="710.19" r="1.3"/><circle cx="354.1" cy="196.82" r="1.3"/><circle cx="354.1" cy="223.82" r="1.3"/><circle cx="354.1" cy="250.82" r="1.3"/><circle cx="354.1" cy="277.82" r="1.3"/><circle cx="354.1" cy="304.82" r="1.3"/><circle cx="354.1" cy="331.82" r="1.3"/><circle cx="354.1" cy="385.82" r="1.3"/><circle cx="354.1" cy="412.82" r="1.3"/><circle cx="354.1" cy="439.82" r="1.3"/><circle cx="354.1" cy="466.82" r="1.3"/><circle cx="354.1" cy="493.82" r="1.3"/><circle cx="354.1" cy="520.82" r="1.3"/><circle cx="354.1" cy="571.53" r="1.3"/><circle cx="354.1" cy="595.25" r="1.3"/><circle cx="354.1" cy="618.96" r="1.3"/><circle cx="354.1" cy="642.68" r="1.3"/><circle cx="354.1" cy="666.39" r="1.3"/><circle cx="354.1" cy="690.11" r="1.3"/><circle cx="354.1" cy="713.82" r="1.3"/><circle cx="378.3" cy="200.45" r="1.3"/><circle cx="378.3" cy="227.45" r="1.3"/><circle cx="378.3" cy="254.45" r="1.3"/><circle cx="378.3" cy="281.45" r="1.3"/><circle cx="378.3" cy="308.45" r="1.3"/><circle cx="378.3" cy="335.45" r="1.3"/><circle cx="378.3" cy="389.45" r="1.3"/><circle cx="378.3" cy="416.45" r="1.3"/><circle cx="378.3" cy="443.45" r="1.3"/><circle cx="378.3" cy="470.45" r="1.3"/><circle cx="378.3" cy="497.45" r="1.3"/><circle cx="378.3" cy="524.45" r="1.3"/><circle cx="378.3" cy="575.16" r="1.3"/><circle cx="378.3" cy="598.88" r="1.3"/><circle cx="378.3" cy="622.59" r="1.3"/><circle cx="378.3" cy="646.31" r="1.3"/><circle cx="378.3" cy="670.02" r="1.3"/><circle cx="378.3" cy="693.74" r="1.3"/><circle cx="378.3" cy="717.45" r="1.3"/><circle cx="402.5" cy="204.08" r="1.3"/><circle cx="402.5" cy="231.08" r="1.3"/><circle cx="402.5" cy="258.08" r="1.3"/><circle cx="402.5" cy="285.08" r="1.3"/><circle cx="402.5" cy="312.08" r="1.3"/><circle cx="402.5" cy="339.08" r="1.3"/><circle cx="402.5" cy="393.08" r="1.3"/><circle cx="402.5" cy="420.08" r="1.3"/><circle cx="402.5" cy="447.08" r="1.3"/><circle cx="402.5" cy="474.08" r="1.3"/><circle cx="402.5" cy="501.08" r="1.3"/><circle cx="402.5" cy="528.08" r="1.3"/><circle cx="402.5" cy="578.79" r="1.3"/><circle cx="402.5" cy="602.51" r="1.3"/><circle cx="402.5" cy="626.22" r="1.3"/><circle cx="402.5" cy="649.94" r="1.3"/><circle cx="402.5" cy="673.65" r="1.3"/><circle cx="402.5" cy="697.37" r="1.3"/><circle cx="402.5" cy="721.08" r="1.3"/><circle cx="426.7" cy="207.71" r="1.3"/><circle cx="426.7" cy="234.71" r="1.3"/><circle cx="426.7" cy="261.71" r="1.3"/><circle cx="426.7" cy="288.71" r="1.3"/><circle cx="426.7" cy="315.71" r="1.3"/><circle cx="426.7" cy="342.71" r="1.3"/><circle cx="426.7" cy="396.71" r="1.3"/><circle cx="426.7" cy="423.71" r="1.3"/><circle cx="426.7" cy="450.71" r="1.3"/><circle cx="426.7" cy="477.71" r="1.3"/><circle cx="426.7" cy="504.71" r="1.3"/><circle cx="426.7" cy="531.71" r="1.3"/><circle cx="426.7" cy="582.42" r="1.3"/><circle cx="426.7" cy="606.14" r="1.3"/><circle cx="426.7" cy="629.85" r="1.3"/><circle cx="426.7" cy="653.57" r="1.3"/><circle cx="426.7" cy="677.28" r="1.3"/><circle cx="426.7" cy="701" r="1.3"/><circle cx="426.7" cy="724.71" r="1.3"/></g>
<line x1="354" y1="169.81" x2="354" y2="736.8" stroke="#202020" stroke-width="1" stroke-dasharray="1 1.5" opacity="0.7"/>
<polygon points="265.9,166.09 442.7,192.61 442.7,362.61 265.9,336.09" fill="none" stroke="#b4b4b4" stroke-width="1.2" stroke-dasharray="9 5"/>
<polygon points="265.9,355.09 442.7,381.61 442.7,551.61 265.9,525.09" fill="none" stroke="#b4b4b4" stroke-width="1.2" stroke-dasharray="9 5"/>
<polygon points="265.9,544.09 442.7,570.61 442.7,740.61 265.9,714.09" fill="none" stroke="#b4b4b4" stroke-width="1.2" stroke-dasharray="9 5"/>
<line x1="257.3" y1="155.3" x2="450.9" y2="184.34" stroke="#000" stroke-width="1.4" />
<line x1="257.3" y1="344.3" x2="450.9" y2="373.34" stroke="#000" stroke-width="1.4" />
<line x1="257.3" y1="533.3" x2="450.9" y2="562.34" stroke="#000" stroke-width="1.4" />
<line x1="257.3" y1="722.3" x2="450.9" y2="751.34" stroke="#000" stroke-width="0" />
<line x1="257.3" y1="154.8" x2="257.3" y2="722.3" stroke="#000" stroke-width="1.2" />
<line x1="451.2" y1="184.34" x2="451.2" y2="751.34" stroke="#303030" stroke-width="1.2" />
<line x1="281.8" y1="725.97" x2="450.9" y2="751.34" stroke="#00f000" stroke-width="2" />
<line x1="296" y1="729.3" x2="300" y2="729.9" stroke="#40ff40" stroke-width="1.5" opacity="0.8"/>
<line x1="320" y1="732.9" x2="324" y2="733.5" stroke="#40ff40" stroke-width="1.5" opacity="0.8"/>
<line x1="365" y1="739.65" x2="369" y2="740.25" stroke="#40ff40" stroke-width="1.5" opacity="0.8"/>
<line x1="390" y1="743.4" x2="394" y2="744" stroke="#40ff40" stroke-width="1.5" opacity="0.8"/>
<line x1="414" y1="747" x2="418" y2="747.61" stroke="#40ff40" stroke-width="1.5" opacity="0.8"/>
<line x1="438" y1="750.61" x2="442" y2="751.21" stroke="#40ff40" stroke-width="1.5" opacity="0.8"/>
<line x1="257.3" y1="627.6" x2="450.9" y2="657.03" stroke="#0000ff" stroke-width="1.3" />
<polyline points="257.3,627.6 268.5,623 346,639.58 354,642" fill="none" stroke="#0000e0" stroke-width="1.1" />
<line x1="289" y1="627.4" x2="283" y2="631.51" stroke="#0000e0" stroke-width="1" />
<line x1="311" y1="631.9" x2="306" y2="635" stroke="#0000e0" stroke-width="1" />
<line x1="333" y1="636.4" x2="329.5" y2="638.57" stroke="#0000e0" stroke-width="1" />
<line x1="257.3" y1="627.6" x2="209" y2="649.2" stroke="#000" stroke-width="1.3" stroke-dasharray="8 3 2 3"/><polygon points="201.7,652.47 207.78,646.46 210.22,651.94" fill="#000" />
<line x1="450.9" y1="657.03" x2="403" y2="678.5" stroke="#000" stroke-width="1.3" stroke-dasharray="8 3 2 3"/><polygon points="395.7,681.77 401.77,675.76 404.23,681.24" fill="#000" />
<line x1="354" y1="252" x2="354" y2="277" stroke="#ff0000" stroke-width="2" /><polygon points="354,251 357.2,259 354,257" fill="#ff0000" /><polygon points="354,278 350.8,270 354,272" fill="#ff0000" />
<line x1="354" y1="441" x2="354" y2="466" stroke="#ff0000" stroke-width="2" /><polygon points="354,440 357.2,448 354,446" fill="#ff0000" /><polygon points="354,467 350.8,459 354,461" fill="#ff0000" />
<line x1="354" y1="630" x2="354" y2="655" stroke="#ff0000" stroke-width="2" /><polygon points="354,629 357.2,637 354,635" fill="#ff0000" /><polygon points="354,656 350.8,648 354,650" fill="#ff0000" />
<circle cx="257.3" cy="155.3" r="1.9" fill="#8a0a14" />
<circle cx="354" cy="169.81" r="1.9" fill="#8a0a14" />
<circle cx="450.9" cy="184.34" r="1.9" fill="#8a0a14" />
<circle cx="257.3" cy="344.3" r="1.9" fill="#8a0a14" />
<circle cx="450.9" cy="373.34" r="1.9" fill="#8a0a14" />
<circle cx="257.3" cy="533.3" r="1.9" fill="#8a0a14" />
<circle cx="450.9" cy="562.34" r="1.9" fill="#8a0a14" />
<circle cx="354" cy="736.8" r="1.9" fill="#8a0a14" />
<circle cx="450.9" cy="751.34" r="1.9" fill="#8a0a14" />
<circle cx="450.9" cy="657.03" r="1.9" fill="#8a0a14" />
<circle cx="257.3" cy="627.6" r="1.9" fill="#8a0a14" />
<line x1="111.6" y1="703" x2="91.1" y2="711.6" stroke="#00e000" stroke-width="2" />
<polygon points="91.1,711.6 98.16,705.17 100.64,711.07" fill="#20b020" />
<line x1="111.6" y1="703" x2="146.1" y2="708.2" stroke="#f00000" stroke-width="2" />
<polygon points="146.1,708.2 136.72,710.02 137.68,703.69" fill="#b01010" />
<line x1="111.6" y1="703" x2="111.6" y2="742" stroke="#0000f0" stroke-width="2" />
<polygon points="111.6,742 108.4,731 114.8,731" fill="#0000b0" />
<line x1="257.4" y1="722.3" x2="236.9" y2="730.5" stroke="#00e000" stroke-width="2" />
<polygon points="236.9,730.5 244.07,724.19 246.44,730.13" fill="#20b020" />
<line x1="257.4" y1="722.3" x2="290.4" y2="727.3" stroke="#f00000" stroke-width="2" />
<polygon points="290.4,727.3 281.02,729.12 281.98,722.79" fill="#b01010" />
<line x1="257.4" y1="722.3" x2="257.4" y2="761.3" stroke="#0000f0" stroke-width="2" />
<polygon points="257.4,761.3 254.2,750.3 260.6,750.3" fill="#0000b0" />
<text x="150.8" y="713" font-size="9.8" fill="#e00000" font-family="Liberation Sans, sans-serif">X</text>
<text x="83" y="718" font-size="9.8" fill="#00c800" font-family="Liberation Sans, sans-serif">Y</text>
<text x="108.2" y="755" font-size="9.8" fill="#0000e0" font-family="Liberation Sans, sans-serif">Z</text>
<text x="296.8" y="735.6" font-size="9.8" fill="#e00000" font-family="Liberation Sans, sans-serif">X</text>
<text x="229" y="737.6" font-size="9.8" fill="#00c800" font-family="Liberation Sans, sans-serif">Y</text>
<text x="254" y="775" font-size="9.8" fill="#0000e0" font-family="Liberation Sans, sans-serif">Z</text>
<rect x="234.5" y="606.5" width="30" height="10.5" fill="#fff" opacity="0.55"/>
<text x="235.8" y="615.8" font-size="10.5" fill="#6060ff" font-family="Liberation Sans, sans-serif" font-weight="bold" textLength="26" lengthAdjust="spacingAndGlyphs">25.32</text>
<text x="243.9" y="622.6" font-size="9.4" fill="#000" font-family="Liberation Sans, sans-serif" textLength="28" lengthAdjust="spacingAndGlyphs">Schnitt</text>
<text x="456.8" y="650.3" font-size="10.5" fill="#6060ff" font-family="Liberation Sans, sans-serif" font-weight="bold" textLength="18.8" lengthAdjust="spacingAndGlyphs">0.01</text>
<text x="60.4" y="131.6" font-size="11" fill="#000" font-family="Liberation Sans, sans-serif" textLength="242.3" lengthAdjust="spacingAndGlyphs">Erforderliche Bewehrung a-s,2,-z (oben) [cm^2/m]</text>
<text x="60.4" y="145.4" font-size="11" fill="#000" font-family="Liberation Sans, sans-serif" textLength="40.6" lengthAdjust="spacingAndGlyphs">Schnitte</text>
<text x="60.4" y="159.3" font-size="11" fill="#000" font-family="Liberation Sans, sans-serif" textLength="239" lengthAdjust="spacingAndGlyphs">RF-BETON Flächen FA1 - Stahlbeton-Bemessung</text>
<text x="60.7" y="805" font-size="11" fill="#000" font-family="Liberation Sans, sans-serif" textLength="292.7" lengthAdjust="spacingAndGlyphs">Max a-s,2,-z (oben): 35.72, Min a-s,2,-z (oben): 0.00 cm^2/m</text>
</g>
<rect x="618.7" y="82.7" width="562.6" height="740.8" fill="#555" rx="5"/>
<rect x="618.7" y="102.7" width="562.6" height="720.8" fill="#555" />
<rect x="619.8" y="83.8" width="560.5" height="738.7" fill="#f4f8fc" rx="4"/>
<rect x="619.8" y="102.7" width="560.5" height="719.8" fill="#d7e4f2" />
<rect x="620.9" y="84.9" width="559.2" height="29.3" fill="url(#titI)" rx="3.5"/>
<rect x="620.9" y="104.7" width="559.2" height="717.8" fill="#d7e4f2" />
<rect x="625.7" y="112.7" width="547.8" height="702.8" fill="#f4f7fb" />
<rect x="625.7" y="112.7" width="546.8" height="701.8" fill="#6c6c6c" />
<rect x="627" y="114" width="545.5" height="700.5" fill="#fff" />
<rect x="628.7" y="93.5" width="16" height="13" fill="#1c1c6c" /><path d="M634.7 95l-5.2 6.5h15.5M634.7 94.5v11.5" fill="none" stroke="#fff" stroke-width="1.8" /><path d="M636.7 95.5l7 5" fill="none" stroke="#d8d8f0" stroke-width="1" />
<text x="648.9" y="105.8" font-size="13" fill="#a09c9c" font-family="Liberation Sans, sans-serif" textLength="94" lengthAdjust="spacingAndGlyphs">Zugeisen Wand*</text>
<rect x="1072" y="91.7" width="31.5" height="17" fill="url(#btnI)" rx="2.5" stroke="#8c9cbc" stroke-width="1"/>
<rect x="1073" y="92.7" width="29.5" height="15" fill="none" rx="1.8" stroke="#fff" stroke-width="0.8" opacity="0.45"/>
<rect x="1082.55" y="99.9" width="10.2" height="3.8" fill="#f4f4f4" stroke="#505468" stroke-width="0.9" rx="1"/>
<rect x="1106" y="91.7" width="31.5" height="17" fill="url(#btnI)" rx="2.5" stroke="#8c9cbc" stroke-width="1"/>
<rect x="1107" y="92.7" width="29.5" height="15" fill="none" rx="1.8" stroke="#fff" stroke-width="0.8" opacity="0.45"/>
<rect x="1116.25" y="95.5" width="10.5" height="8.5" fill="#f4f4f4" stroke="#505468" stroke-width="0.9" rx="1"/>
<rect x="1119.05" y="98.4" width="5" height="2.8" fill="#c8d4e6" stroke="#505468" stroke-width="0.8"/>
<rect x="1139.5" y="91.7" width="32.5" height="17" fill="url(#btnI)" rx="2.5" stroke="#8c9cbc" stroke-width="1"/>
<rect x="1140.5" y="92.7" width="30.5" height="15" fill="none" rx="1.8" stroke="#fff" stroke-width="0.8" opacity="0.45"/>
<path d="M1151.75 96.4l8 6.6M1159.75 96.4l-8 6.6" fill="none" stroke="#484858" stroke-width="4.2" stroke-linecap="butt"/>
<path d="M1151.75 96.4l8 6.6M1159.75 96.4l-8 6.6" fill="none" stroke="#f6f6f6" stroke-width="2.5" stroke-linecap="butt"/>
<clipPath id="clipR"><rect x="627" y="114" width="545.5" height="700.5"/></clipPath>
<g clip-path="url(#clipR)">
<rect x="627" y="114" width="545.5" height="700.5" fill="#fff" />
<polygon points="14,94.18 3342.6,592.62 1531.4,1401.58 -1797.2,903.14" fill="#fbfbfb" />
<line x1="14" y1="94.18" x2="3342.6" y2="592.62" stroke="#c4c4c4" stroke-width="1" />
<line x1="209.8" y1="123.5" x2="-1601.4" y2="932.46" stroke="#c4c4c4" stroke-width="1" />
<line x1="-269" y1="220.58" x2="3059.6" y2="719.02" stroke="#c4c4c4" stroke-width="1" />
<line x1="699.3" y1="196.8" x2="-1111.9" y2="1005.76" stroke="#c4c4c4" stroke-width="1" />
<line x1="-552" y1="346.98" x2="2776.6" y2="845.42" stroke="#c4c4c4" stroke-width="1" />
<line x1="1188.8" y1="270.1" x2="-622.4" y2="1079.06" stroke="#c4c4c4" stroke-width="1" />
<line x1="-1118" y1="599.78" x2="2210.6" y2="1098.22" stroke="#c4c4c4" stroke-width="1" />
<line x1="2167.8" y1="416.7" x2="356.6" y2="1225.66" stroke="#c4c4c4" stroke-width="1" />
<line x1="-1401" y1="726.18" x2="1927.6" y2="1224.62" stroke="#c4c4c4" stroke-width="1" />
<line x1="2657.3" y1="490" x2="846.1" y2="1298.96" stroke="#c4c4c4" stroke-width="1" />
<line x1="-1684" y1="852.58" x2="1644.6" y2="1351.02" stroke="#c4c4c4" stroke-width="1" />
<line x1="3146.8" y1="563.3" x2="1335.6" y2="1372.26" stroke="#c4c4c4" stroke-width="1" />
<path d="M650 189.5h1M699 196.5h1M671 209.5h1M642 222.5h1M748 204.5h1M719 216.5h1M691 229.5h1M663 242.5h1M635 254.5h1M797 211.5h1M768 224.5h1M740 236.5h1M712 249.5h1M684 262.5h1M655 274.5h1M627 287.5h1M846 218.5h1M817 231.5h1M789 244.5h1M761 256.5h1M732 269.5h1M704 281.5h1M676 294.5h1M648 307.5h1M895 226.5h1M866 238.5h1M838 251.5h1M810 264.5h1M781 276.5h1M753 289.5h1M725 301.5h1M696 314.5h1M668 327.5h1M640 339.5h1M944 233.5h1M915 246.5h1M887 258.5h1M859 271.5h1M830 284.5h1M802 296.5h1M774 309.5h1M745 321.5h1M717 334.5h1M689 347.5h1M661 359.5h1M632 372.5h1M992 240.5h1M964 253.5h1M936 266.5h1M908 278.5h1M879 291.5h1M851 303.5h1M823 316.5h1M794 329.5h1M766 341.5h1M738 354.5h1M709 367.5h1M681 379.5h1M653 392.5h1M625 405.5h1M1041 248.5h1M1013 260.5h1M985 273.5h1M957 286.5h1M928 298.5h1M900 311.5h1M872 323.5h1M843 336.5h1M815 349.5h1M787 361.5h1M758 374.5h1M730 387.5h1M702 399.5h1M674 412.5h1M645 425.5h1M1090 255.5h1M1062 268.5h1M1034 280.5h1M1005 293.5h1M977 306.5h1M949 318.5h1M921 331.5h1M892 343.5h1M864 356.5h1M836 369.5h1M807 381.5h1M779 394.5h1M751 407.5h1M722 419.5h1M694 432.5h1M666 445.5h1M638 457.5h1M1139 262.5h1M1111 275.5h1M1083 288.5h1M1054 300.5h1M1026 313.5h1M998 325.5h1M970 338.5h1M941 351.5h1M913 363.5h1M885 376.5h1M856 389.5h1M828 401.5h1M800 414.5h1M771 427.5h1M743 439.5h1M715 452.5h1M687 465.5h1M658 477.5h1M630 490.5h1M1160 282.5h1M1132 295.5h1M1103 308.5h1M1075 320.5h1M1047 333.5h1M1019 345.5h1M990 358.5h1M962 371.5h1M934 383.5h1M905 396.5h1M877 409.5h1M849 421.5h1M820 434.5h1M792 447.5h1M764 459.5h1M736 472.5h1M707 484.5h1M679 497.5h1M651 510.5h1M1152 315.5h1M1124 327.5h1M1096 340.5h1M1067 353.5h1M1039 365.5h1M1011 378.5h1M983 391.5h1M954 403.5h1M926 416.5h1M898 429.5h1M869 441.5h1M841 454.5h1M813 467.5h1M784 479.5h1M756 492.5h1M728 504.5h1M700 517.5h1M671 530.5h1M643 542.5h1M1173 335.5h1M1145 347.5h1M1116 360.5h1M1088 373.5h1M1060 385.5h1M1032 398.5h1M1003 411.5h1M975 423.5h1M947 436.5h1M918 449.5h1M890 461.5h1M862 474.5h1M833 487.5h1M805 499.5h1M777 512.5h1M749 524.5h1M720 537.5h1M692 550.5h1M664 562.5h1M635 575.5h1M1165 367.5h1M1137 380.5h1M1109 393.5h1M1080 405.5h1M1052 418.5h1M1024 431.5h1M996 443.5h1M967 456.5h1M939 469.5h1M911 481.5h1M882 494.5h1M854 506.5h1M826 519.5h1M797 532.5h1M769 544.5h1M741 557.5h1M713 570.5h1M684 582.5h1M656 595.5h1M628 608.5h1M1158 400.5h1M1129 413.5h1M1101 425.5h1M1073 438.5h1M1045 451.5h1M1016 463.5h1M988 476.5h1M960 489.5h1M931 501.5h1M903 514.5h1M875 526.5h1M846 539.5h1M818 552.5h1M790 564.5h1M761 577.5h1M733 590.5h1M705 602.5h1M677 615.5h1M648 628.5h1M1150 433.5h1M1122 445.5h1M1093 458.5h1M1065 471.5h1M1037 483.5h1M1009 496.5h1M980 508.5h1M952 521.5h1M924 534.5h1M895 546.5h1M867 559.5h1M839 572.5h1M810 584.5h1M782 597.5h1M754 610.5h1M726 622.5h1M697 635.5h1M669 648.5h1M641 660.5h1M1171 453.5h1M1142 465.5h1M1114 478.5h1M1086 491.5h1M1058 503.5h1M1029 516.5h1M1001 528.5h1M973 541.5h1M944 554.5h1M916 566.5h1M888 579.5h1M859 592.5h1M831 604.5h1M803 617.5h1M775 630.5h1M746 642.5h1M718 655.5h1M690 668.5h1M661 680.5h1M633 693.5h1M1163 485.5h1M1135 498.5h1M1106 511.5h1M1078 523.5h1M1050 536.5h1M1022 548.5h1M993 561.5h1M965 574.5h1M937 586.5h1M908 599.5h1M880 612.5h1M852 624.5h1M823 637.5h1M795 650.5h1M767 662.5h1M739 675.5h1M710 687.5h1M682 700.5h1M654 713.5h1M625 725.5h1M1155 518.5h1M1127 530.5h1M1099 543.5h1M1071 556.5h1M1042 568.5h1M1014 581.5h1M986 594.5h1M957 606.5h1M929 619.5h1M901 632.5h1M872 644.5h1M844 657.5h1M816 670.5h1M788 682.5h1M759 695.5h1M731 707.5h1M703 720.5h1M674 733.5h1M646 745.5h1M1148 550.5h1M1119 563.5h1M1091 576.5h1M1063 588.5h1M1035 601.5h1M1006 614.5h1M978 626.5h1M950 639.5h1M921 652.5h1M893 664.5h1M865 677.5h1M836 689.5h1M808 702.5h1M780 715.5h1M752 727.5h1M723 740.5h1M695 753.5h1M667 765.5h1M638 778.5h1M1168 570.5h1M1140 583.5h1M1112 596.5h1M1084 608.5h1M1055 621.5h1M1027 634.5h1M999 646.5h1M970 659.5h1M942 672.5h1M914 684.5h1M885 697.5h1M857 709.5h1M829 722.5h1M801 735.5h1M772 747.5h1M744 760.5h1M716 773.5h1M687 785.5h1M659 798.5h1M631 811.5h1M1161 603.5h1M1132 616.5h1M1104 628.5h1M1076 641.5h1M1048 654.5h1M1019 666.5h1M991 679.5h1M963 692.5h1M934 704.5h1M906 717.5h1M878 729.5h1M849 742.5h1M821 755.5h1M793 767.5h1M765 780.5h1M736 793.5h1M708 805.5h1M1153 636.5h1M1125 648.5h1M1097 661.5h1M1068 674.5h1M1040 686.5h1M1012 699.5h1M983 711.5h1M955 724.5h1M927 737.5h1M898 749.5h1M870 762.5h1M842 775.5h1M813 787.5h1M785 800.5h1M757 813.5h1M1174 656.5h1M1145 668.5h1M1117 681.5h1M1089 694.5h1M1061 706.5h1M1032 719.5h1M1004 731.5h1M976 744.5h1M947 757.5h1M919 769.5h1M891 782.5h1M862 795.5h1M834 807.5h1M1166 688.5h1M1138 701.5h1M1110 714.5h1M1081 726.5h1M1053 739.5h1M1025 751.5h1M996 764.5h1M968 777.5h1M940 789.5h1M911 802.5h1M883 815.5h1M1158 721.5h1M1130 733.5h1M1102 746.5h1M1074 759.5h1M1045 771.5h1M1017 784.5h1M989 797.5h1M960 809.5h1M1151 753.5h1M1123 766.5h1M1094 779.5h1M1066 791.5h1M1038 804.5h1M1171 773.5h1M1143 786.5h1M1115 799.5h1M1087 811.5h1M1164 806.5h1" stroke="#000" stroke-width="1" fill="none" shape-rendering="crispEdges"/>
<line x1="-835" y1="473.38" x2="2493.6" y2="971.82" stroke="#209090" stroke-width="1.3" />
<line x1="1678.3" y1="343.4" x2="-132.9" y2="1152.36" stroke="#209090" stroke-width="1.3" />
<path d="M853.77 153.26V726.26M878.25 156.93V729.93M902.72 160.59V733.59M951.67 167.92V740.92M976.15 171.58V744.58M1000.62 175.25V748.25M829.3 176.89L1025.1 206.2M829.3 204.17L1025.1 233.48M829.3 231.46L1025.1 260.77M829.3 258.74L1025.1 288.05M829.3 286.03L1025.1 315.34M829.3 313.31L1025.1 342.63M829.3 367.89L1025.1 397.2M829.3 395.17L1025.1 424.48M829.3 422.46L1025.1 451.77M829.3 449.74L1025.1 479.05M829.3 477.03L1025.1 506.34M829.3 504.31L1025.1 533.63M829.3 555.6L1025.1 584.91M829.3 579.6L1025.1 608.91M829.3 603.6L1025.1 632.91M829.3 627.6L1025.1 656.91M829.3 651.6L1025.1 680.91M829.3 675.6L1025.1 704.91M829.3 699.6L1025.1 728.91" stroke="#8c8c8c" stroke-width="1" stroke-dasharray="1 1.7" fill="none" opacity="0.8"/>
<g fill="none" stroke="#a0a0a0" stroke-width="0.6" opacity="0.55"><circle cx="853.77" cy="180.55" r="1.3"/><circle cx="853.77" cy="207.84" r="1.3"/><circle cx="853.77" cy="235.12" r="1.3"/><circle cx="853.77" cy="262.41" r="1.3"/><circle cx="853.77" cy="289.69" r="1.3"/><circle cx="853.77" cy="316.98" r="1.3"/><circle cx="853.77" cy="371.55" r="1.3"/><circle cx="853.77" cy="398.84" r="1.3"/><circle cx="853.77" cy="426.12" r="1.3"/><circle cx="853.77" cy="453.41" r="1.3"/><circle cx="853.77" cy="480.69" r="1.3"/><circle cx="853.77" cy="507.98" r="1.3"/><circle cx="853.77" cy="559.26" r="1.3"/><circle cx="853.77" cy="583.26" r="1.3"/><circle cx="853.77" cy="607.26" r="1.3"/><circle cx="853.77" cy="631.26" r="1.3"/><circle cx="853.77" cy="655.26" r="1.3"/><circle cx="853.77" cy="679.26" r="1.3"/><circle cx="853.77" cy="703.26" r="1.3"/><circle cx="878.25" cy="184.21" r="1.3"/><circle cx="878.25" cy="211.5" r="1.3"/><circle cx="878.25" cy="238.78" r="1.3"/><circle cx="878.25" cy="266.07" r="1.3"/><circle cx="878.25" cy="293.36" r="1.3"/><circle cx="878.25" cy="320.64" r="1.3"/><circle cx="878.25" cy="375.21" r="1.3"/><circle cx="878.25" cy="402.5" r="1.3"/><circle cx="878.25" cy="429.78" r="1.3"/><circle cx="878.25" cy="457.07" r="1.3"/><circle cx="878.25" cy="484.36" r="1.3"/><circle cx="878.25" cy="511.64" r="1.3"/><circle cx="878.25" cy="562.93" r="1.3"/><circle cx="878.25" cy="586.93" r="1.3"/><circle cx="878.25" cy="610.93" r="1.3"/><circle cx="878.25" cy="634.93" r="1.3"/><circle cx="878.25" cy="658.93" r="1.3"/><circle cx="878.25" cy="682.93" r="1.3"/><circle cx="878.25" cy="706.93" r="1.3"/><circle cx="902.72" cy="187.88" r="1.3"/><circle cx="902.72" cy="215.16" r="1.3"/><circle cx="902.72" cy="242.45" r="1.3"/><circle cx="902.72" cy="269.73" r="1.3"/><circle cx="902.72" cy="297.02" r="1.3"/><circle cx="902.72" cy="324.31" r="1.3"/><circle cx="902.72" cy="378.88" r="1.3"/><circle cx="902.72" cy="406.16" r="1.3"/><circle cx="902.72" cy="433.45" r="1.3"/><circle cx="902.72" cy="460.73" r="1.3"/><circle cx="902.72" cy="488.02" r="1.3"/><circle cx="902.72" cy="515.31" r="1.3"/><circle cx="902.72" cy="566.59" r="1.3"/><circle cx="902.72" cy="590.59" r="1.3"/><circle cx="902.72" cy="614.59" r="1.3"/><circle cx="902.72" cy="638.59" r="1.3"/><circle cx="902.72" cy="662.59" r="1.3"/><circle cx="902.72" cy="686.59" r="1.3"/><circle cx="902.72" cy="710.59" r="1.3"/><circle cx="927.2" cy="191.54" r="1.3"/><circle cx="927.2" cy="218.83" r="1.3"/><circle cx="927.2" cy="246.11" r="1.3"/><circle cx="927.2" cy="273.4" r="1.3"/><circle cx="927.2" cy="300.68" r="1.3"/><circle cx="927.2" cy="327.97" r="1.3"/><circle cx="927.2" cy="382.54" r="1.3"/><circle cx="927.2" cy="409.83" r="1.3"/><circle cx="927.2" cy="437.11" r="1.3"/><circle cx="927.2" cy="464.4" r="1.3"/><circle cx="927.2" cy="491.68" r="1.3"/><circle cx="927.2" cy="518.97" r="1.3"/><circle cx="927.2" cy="570.26" r="1.3"/><circle cx="927.2" cy="594.26" r="1.3"/><circle cx="927.2" cy="618.26" r="1.3"/><circle cx="927.2" cy="642.26" r="1.3"/><circle cx="927.2" cy="666.26" r="1.3"/><circle cx="927.2" cy="690.26" r="1.3"/><circle cx="927.2" cy="714.26" r="1.3"/><circle cx="951.67" cy="195.21" r="1.3"/><circle cx="951.67" cy="222.49" r="1.3"/><circle cx="951.67" cy="249.78" r="1.3"/><circle cx="951.67" cy="277.06" r="1.3"/><circle cx="951.67" cy="304.35" r="1.3"/><circle cx="951.67" cy="331.63" r="1.3"/><circle cx="951.67" cy="386.21" r="1.3"/><circle cx="951.67" cy="413.49" r="1.3"/><circle cx="951.67" cy="440.78" r="1.3"/><circle cx="951.67" cy="468.06" r="1.3"/><circle cx="951.67" cy="495.35" r="1.3"/><circle cx="951.67" cy="522.63" r="1.3"/><circle cx="951.67" cy="573.92" r="1.3"/><circle cx="951.67" cy="597.92" r="1.3"/><circle cx="951.67" cy="621.92" r="1.3"/><circle cx="951.67" cy="645.92" r="1.3"/><circle cx="951.67" cy="669.92" r="1.3"/><circle cx="951.67" cy="693.92" r="1.3"/><circle cx="951.67" cy="717.92" r="1.3"/><circle cx="976.15" cy="198.87" r="1.3"/><circle cx="976.15" cy="226.15" r="1.3"/><circle cx="976.15" cy="253.44" r="1.3"/><circle cx="976.15" cy="280.73" r="1.3"/><circle cx="976.15" cy="308.01" r="1.3"/><circle cx="976.15" cy="335.3" r="1.3"/><circle cx="976.15" cy="389.87" r="1.3"/><circle cx="976.15" cy="417.15" r="1.3"/><circle cx="976.15" cy="444.44" r="1.3"/><circle cx="976.15" cy="471.73" r="1.3"/><circle cx="976.15" cy="499.01" r="1.3"/><circle cx="976.15" cy="526.3" r="1.3"/><circle cx="976.15" cy="577.58" r="1.3"/><circle cx="976.15" cy="601.58" r="1.3"/><circle cx="976.15" cy="625.58" r="1.3"/><circle cx="976.15" cy="649.58" r="1.3"/><circle cx="976.15" cy="673.58" r="1.3"/><circle cx="976.15" cy="697.58" r="1.3"/><circle cx="976.15" cy="721.58" r="1.3"/><circle cx="1000.62" cy="202.53" r="1.3"/><circle cx="1000.62" cy="229.82" r="1.3"/><circle cx="1000.62" cy="257.1" r="1.3"/><circle cx="1000.62" cy="284.39" r="1.3"/><circle cx="1000.62" cy="311.68" r="1.3"/><circle cx="1000.62" cy="338.96" r="1.3"/><circle cx="1000.62" cy="393.53" r="1.3"/><circle cx="1000.62" cy="420.82" r="1.3"/><circle cx="1000.62" cy="448.1" r="1.3"/><circle cx="1000.62" cy="475.39" r="1.3"/><circle cx="1000.62" cy="502.68" r="1.3"/><circle cx="1000.62" cy="529.96" r="1.3"/><circle cx="1000.62" cy="581.25" r="1.3"/><circle cx="1000.62" cy="605.25" r="1.3"/><circle cx="1000.62" cy="629.25" r="1.3"/><circle cx="1000.62" cy="653.25" r="1.3"/><circle cx="1000.62" cy="677.25" r="1.3"/><circle cx="1000.62" cy="701.25" r="1.3"/><circle cx="1000.62" cy="725.25" r="1.3"/></g>
<polygon points="838.1,160.42 1016.8,187.17 1016.8,359.17 838.1,332.42" fill="none" stroke="#a8a8a8" stroke-width="1.2" stroke-dasharray="9 5"/>
<polygon points="838.1,351.42 1016.8,378.17 1016.8,550.17 838.1,523.42" fill="none" stroke="#a8a8a8" stroke-width="1.2" stroke-dasharray="9 5"/>
<polygon points="838.1,542.42 1016.8,569.17 1016.8,741.17 838.1,714.42" fill="none" stroke="#a8a8a8" stroke-width="1.2" stroke-dasharray="9 5"/>
<line x1="829.3" y1="149.6" x2="1025.1" y2="178.91" stroke="#000" stroke-width="1.4" />
<line x1="829.3" y1="340.6" x2="1025.1" y2="369.91" stroke="#000" stroke-width="1.4" />
<line x1="829.3" y1="531.6" x2="1025.1" y2="560.91" stroke="#000" stroke-width="1.4" />
<line x1="829.3" y1="149.6" x2="829.3" y2="722.6" stroke="#000" stroke-width="1.2" />
<line x1="1025.1" y1="178.91" x2="1025.1" y2="751.91" stroke="#202020" stroke-width="1.2" />
<line x1="829.3" y1="722.6" x2="927.3" y2="737.27" stroke="#e02020" stroke-width="1.3" />
<line x1="927.3" y1="737.27" x2="1025.1" y2="751.91" stroke="#00f000" stroke-width="1.6" />
<line x1="899" y1="734.33" x2="905" y2="735.23" stroke="#30f030" stroke-width="1.6" />
<line x1="948" y1="741.67" x2="954" y2="742.57" stroke="#30f030" stroke-width="1.6" />
<line x1="996" y1="748.85" x2="1002" y2="749.75" stroke="#30f030" stroke-width="1.6" />
<line x1="829.3" y1="627.6" x2="1025.1" y2="656.68" stroke="#282828" stroke-width="1" />
<line x1="829.3" y1="627.6" x2="781" y2="648.5" stroke="#000" stroke-width="1.3" stroke-dasharray="8 3 2 3"/><polygon points="773.66,651.68 779.81,645.75 782.19,651.25" fill="#000" />
<line x1="1025.1" y1="656.68" x2="976.5" y2="677.5" stroke="#000" stroke-width="1.3" stroke-dasharray="8 3 2 3"/><polygon points="969.15,680.65 975.32,674.74 977.68,680.26" fill="#000" />
<line x1="927.3" y1="164.27" x2="927.3" y2="737.27" stroke="#d42828" stroke-width="2.2" />
<polyline points="927.3,164.27 920.2,211 921,258.3 921,307.3 921.3,354.5 916.6,402.3 913.3,450 910,496.7 905.7,544.3 899.3,591.7 893.4,637.2 885.8,683 878.6,730" fill="none" stroke="#f01010" stroke-width="1.2" />
<line x1="920.2" y1="211" x2="927.3" y2="212.06" stroke="#f01010" stroke-width="1.2" />
<line x1="921" y1="258.3" x2="927.3" y2="259.24" stroke="#f01010" stroke-width="1.2" />
<line x1="921" y1="307.3" x2="927.3" y2="308.24" stroke="#f01010" stroke-width="1.2" />
<line x1="921.3" y1="354.5" x2="927.3" y2="355.4" stroke="#f01010" stroke-width="1.2" />
<line x1="916.6" y1="402.3" x2="927.3" y2="403.9" stroke="#f01010" stroke-width="1.2" />
<line x1="913.3" y1="450" x2="927.3" y2="452.1" stroke="#f01010" stroke-width="1.2" />
<line x1="910" y1="496.7" x2="927.3" y2="499.29" stroke="#f01010" stroke-width="1.2" />
<line x1="905.7" y1="544.3" x2="927.3" y2="547.53" stroke="#f01010" stroke-width="1.2" />
<line x1="899.3" y1="591.7" x2="927.3" y2="595.89" stroke="#f01010" stroke-width="1.2" />
<line x1="893.4" y1="637.2" x2="927.3" y2="642.27" stroke="#f01010" stroke-width="1.2" />
<line x1="885.8" y1="683" x2="927.3" y2="689.21" stroke="#f01010" stroke-width="1.2" />
<polyline points="927.3,164.57 934.8,165.6 927.6,211.5" fill="none" stroke="#1010f0" stroke-width="1.2" />
<text x="897.7" y="214.2" font-size="9.4" fill="#f00000" font-family="Liberation Sans, sans-serif" textLength="16.3" lengthAdjust="spacingAndGlyphs">7.69</text>
<text x="897.7" y="261.8" font-size="9.4" fill="#f00000" font-family="Liberation Sans, sans-serif" textLength="16.3" lengthAdjust="spacingAndGlyphs">7.60</text>
<text x="899.8" y="310.6" font-size="9.4" fill="#f00000" font-family="Liberation Sans, sans-serif" textLength="15" lengthAdjust="spacingAndGlyphs">7.51</text>
<text x="901" y="358" font-size="9.4" fill="#f00000" font-family="Liberation Sans, sans-serif" textLength="14.7" lengthAdjust="spacingAndGlyphs">7.41</text>
<text x="896" y="405.6" font-size="9.4" fill="#f00000" font-family="Liberation Sans, sans-serif" textLength="15.7" lengthAdjust="spacingAndGlyphs">11.15</text>
<text x="889.5" y="452.6" font-size="9.4" fill="#f00000" font-family="Liberation Sans, sans-serif" textLength="18.3" lengthAdjust="spacingAndGlyphs">15.13</text>
<text x="886.7" y="499.2" font-size="9.4" fill="#f00000" font-family="Liberation Sans, sans-serif" textLength="17.7" lengthAdjust="spacingAndGlyphs">19.21</text>
<text x="878.3" y="546.6" font-size="9.4" fill="#f00000" font-family="Liberation Sans, sans-serif" textLength="21.7" lengthAdjust="spacingAndGlyphs">23.48</text>
<text x="872" y="593.2" font-size="9.4" fill="#f00000" font-family="Liberation Sans, sans-serif" textLength="21" lengthAdjust="spacingAndGlyphs">30.25</text>
<text x="865.5" y="651" font-size="9.4" fill="#f00000" font-family="Liberation Sans, sans-serif" textLength="21.3" lengthAdjust="spacingAndGlyphs">37.33</text>
<text x="859" y="687" font-size="9.4" fill="#f00000" font-family="Liberation Sans, sans-serif" textLength="21.7" lengthAdjust="spacingAndGlyphs">44.67</text>
<text x="852.3" y="722.8" font-size="9.4" fill="#f00000" font-family="Liberation Sans, sans-serif" textLength="21.3" lengthAdjust="spacingAndGlyphs">52.52</text>
<text x="941.3" y="179.2" font-size="9.4" fill="#1010f0" font-family="Liberation Sans, sans-serif" textLength="16.3" lengthAdjust="spacingAndGlyphs">7.78</text>
<circle cx="829.3" cy="149.6" r="1.9" fill="#8a0a14" />
<circle cx="927.3" cy="164.27" r="1.9" fill="#8a0a14" />
<circle cx="1025.1" cy="178.91" r="1.9" fill="#8a0a14" />
<circle cx="829.3" cy="340.6" r="1.9" fill="#8a0a14" />
<circle cx="1025.1" cy="369.91" r="1.9" fill="#8a0a14" />
<circle cx="829.3" cy="531.6" r="1.9" fill="#8a0a14" />
<circle cx="1025.1" cy="560.91" r="1.9" fill="#8a0a14" />
<circle cx="927.3" cy="737.27" r="1.9" fill="#8a0a14" />
<circle cx="1025.1" cy="751.91" r="1.9" fill="#8a0a14" />
<circle cx="1025.1" cy="656.68" r="1.9" fill="#8a0a14" />
<circle cx="829.3" cy="627.6" r="1.9" fill="#8a0a14" />
<circle cx="829.3" cy="722.6" r="1.9" fill="#8a0a14" />
<line x1="682.8" y1="704.7" x2="662.8" y2="712.2" stroke="#00e000" stroke-width="2" />
<polygon points="662.8,712.2 670.1,706.04 672.35,712.04" fill="#20b020" />
<line x1="682.8" y1="704.7" x2="718.8" y2="709.9" stroke="#f00000" stroke-width="2" />
<polygon points="718.8,709.9 709.43,711.78 710.35,705.45" fill="#b01010" />
<line x1="682.8" y1="704.7" x2="682.8" y2="742.7" stroke="#0000f0" stroke-width="2" />
<polygon points="682.8,742.7 679.6,731.7 686,731.7" fill="#0000b0" />
<line x1="829.3" y1="722.6" x2="810.3" y2="730.8" stroke="#00e000" stroke-width="2" />
<polygon points="810.3,730.8 817.3,724.3 819.83,730.17" fill="#20b020" />
<line x1="829.3" y1="722.6" x2="863.8" y2="727.6" stroke="#f00000" stroke-width="2" />
<polygon points="863.8,727.6 854.43,729.48 855.35,723.14" fill="#b01010" />
<line x1="829.3" y1="722.6" x2="829.3" y2="761.6" stroke="#0000f0" stroke-width="2" />
<polygon points="829.3,761.6 826.1,750.6 832.5,750.6" fill="#0000b0" />
<text x="722.8" y="714" font-size="9.8" fill="#e00000" font-family="Liberation Sans, sans-serif">X</text>
<text x="654.5" y="720" font-size="9.8" fill="#00c800" font-family="Liberation Sans, sans-serif">Y</text>
<text x="679.7" y="756" font-size="9.8" fill="#0000e0" font-family="Liberation Sans, sans-serif">Z</text>
<text x="869.3" y="733.3" font-size="9.8" fill="#e00000" font-family="Liberation Sans, sans-serif">X</text>
<text x="801.5" y="738.2" font-size="9.8" fill="#00c800" font-family="Liberation Sans, sans-serif">Y</text>
<text x="826.5" y="775.5" font-size="9.8" fill="#0000e0" font-family="Liberation Sans, sans-serif">Z</text>
<text x="817.2" y="622.3" font-size="9.4" fill="#000" font-family="Liberation Sans, sans-serif" textLength="27.6" lengthAdjust="spacingAndGlyphs">Schnitt</text>
<text x="632.2" y="129.6" font-size="11" fill="#000" font-family="Liberation Sans, sans-serif" textLength="284.2" lengthAdjust="spacingAndGlyphs">RF-BETON Stäbe FA1 - Stahlbetonbemessung von Stäben</text>
<text x="632.9" y="795.5" font-size="11" fill="#000" font-family="Liberation Sans, sans-serif" textLength="149.6" lengthAdjust="spacingAndGlyphs">Max A-s,+z (unten): 7.78 cm^2</text>
<text x="632.9" y="805" font-size="11" fill="#000" font-family="Liberation Sans, sans-serif" textLength="149.3" lengthAdjust="spacingAndGlyphs">Max A-s,-z (oben): 52.52 cm^2</text>
</g>
</svg></body></html>
